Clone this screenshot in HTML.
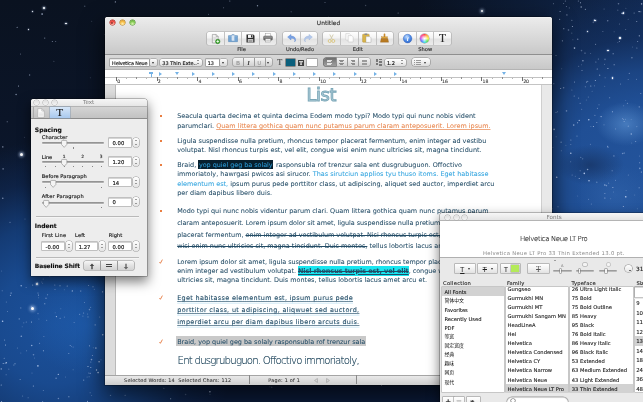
<!DOCTYPE html>
<html><head><meta charset="utf-8"><title>Untitled</title>
<style>
html,body{margin:0;padding:0}
body{width:643px;height:402px;overflow:hidden;position:relative;background:#0b1426;font-family:'DejaVu Sans','Liberation Sans','Noto Sans CJK SC',sans-serif}
.t{position:absolute;white-space:nowrap;-webkit-text-stroke:.14px currentColor;}
div,span,svg{box-sizing:border-box}
svg{position:absolute;overflow:visible}
#root{position:absolute;left:0;top:0;width:643px;height:402px;overflow:hidden;will-change:transform}
</style></head>
<body>
<div id="root">
<div style="position:absolute;left:0;top:0;width:643px;height:402px;background:
radial-gradient(ellipse 30px 22px at 626px 124px, rgba(86,140,205,.7), rgba(86,140,205,0) 100%),
radial-gradient(ellipse 34px 20px at 590px 165px, rgba(20,44,86,.6), rgba(20,44,86,0) 100%),
radial-gradient(ellipse 40px 30px at 615px 195px, rgba(52,104,176,.5), rgba(52,104,176,0) 100%),
radial-gradient(ellipse 60px 50px at 88px 325px, rgba(32,96,178,.6), rgba(32,96,178,0) 100%),
radial-gradient(ellipse 215px 190px at 650px 178px, #23549c 0%, #204f95 40%, rgba(28,70,134,.95) 56%, rgba(20,50,100,.7) 74%, rgba(14,34,70,0) 100%),
radial-gradient(ellipse 185px 185px at 55px 325px, #1b509a 0%, #194a8f 32%, rgba(21,62,122,.92) 55%, rgba(16,42,86,.6) 78%, rgba(13,30,60,0) 100%),
linear-gradient(90deg,rgba(10,18,34,0) 0%,rgba(10,18,34,0) 65%,rgba(18,44,88,.85) 100%),
linear-gradient(180deg,#0a1220 0%,#0b1528 30%,#0c1a34 70%,#0b1a38 100%);"></div>
<div style="position:absolute;left:0;top:0;width:1px;height:1px;border-radius:50%;box-shadow:208.2px 60.6px 0 0.0px rgba(210,225,255,0.25),528.1px 37.8px 0 0.0px rgba(210,225,255,0.80),584.9px 86.3px 0 0.2px rgba(210,225,255,0.25),268.9px 96.7px 0 0.2px rgba(210,225,255,0.80),38.0px 227.3px 0 0.3px rgba(210,225,255,0.35),609.4px 232.0px 0 0.0px rgba(210,225,255,0.60),627.7px 18.7px 0 0.0px rgba(210,225,255,0.35),269.5px 217.4px 0 0.0px rgba(210,225,255,0.80),360.2px 274.2px 0 0.3px rgba(210,225,255,0.25),367.3px 75.5px 0 0.3px rgba(210,225,255,0.25),457.9px 226.9px 0 0.0px rgba(210,225,255,0.80),319.2px 213.8px 0 0.2px rgba(210,225,255,0.45),376.5px 182.2px 0 0.0px rgba(210,225,255,0.45),510.8px 281.0px 0 0.0px rgba(210,225,255,0.35),369.4px 211.1px 0 0.2px rgba(210,225,255,0.45),185.1px 394.0px 0 0.3px rgba(210,225,255,0.25),268.9px 304.4px 0 0.2px rgba(210,225,255,0.35),271.2px 386.7px 0 0.3px rgba(210,225,255,0.25),368.5px 351.9px 0 0.0px rgba(210,225,255,0.45),447.1px 238.9px 0 0.2px rgba(210,225,255,0.80),44.2px 37.6px 0 0.2px rgba(210,225,255,0.45),448.2px 26.1px 0 0.3px rgba(210,225,255,0.45),638.6px 330.4px 0 0.2px rgba(210,225,255,0.45),570.4px 139.5px 0 0.0px rgba(210,225,255,0.60),108.1px 47.1px 0 0.0px rgba(210,225,255,0.25),494.0px 52.0px 0 0.2px rgba(210,225,255,0.35),251.4px 350.3px 0 0.0px rgba(210,225,255,0.25),288.8px 220.9px 0 0.2px rgba(210,225,255,0.35),555.5px 111.9px 0 0.0px rgba(210,225,255,0.60),439.0px 152.9px 0 0.0px rgba(210,225,255,0.35),53.4px 60.8px 0 0.0px rgba(210,225,255,0.35),311.8px 236.8px 0 0.0px rgba(210,225,255,0.45),2.6px 168.4px 0 0.3px rgba(210,225,255,0.45),364.2px 383.1px 0 0.3px rgba(210,225,255,0.80),421.1px 297.4px 0 0.3px rgba(210,225,255,0.60),252.3px 160.4px 0 0.2px rgba(210,225,255,0.25),407.8px 25.0px 0 0.0px rgba(210,225,255,0.25),283.3px 44.2px 0 0.0px rgba(210,225,255,0.80),65.8px 227.8px 0 0.0px rgba(210,225,255,0.80),610.2px 246.7px 0 0.0px rgba(210,225,255,0.25),394.8px 59.7px 0 0.0px rgba(210,225,255,0.45),387.3px 190.6px 0 0.2px rgba(210,225,255,0.25),638.6px 187.3px 0 0.0px rgba(210,225,255,0.60),55.2px 41.1px 0 0.0px rgba(210,225,255,0.45),307.8px 278.2px 0 0.0px rgba(210,225,255,0.80),132.0px 382.7px 0 0.0px rgba(210,225,255,0.45),443.7px 367.5px 0 0.0px rgba(210,225,255,0.80),629.2px 347.1px 0 0.3px rgba(210,225,255,0.45),235.8px 67.2px 0 0.3px rgba(210,225,255,0.35),348.2px 202.1px 0 0.3px rgba(210,225,255,0.35),521.8px 395.9px 0 0.0px rgba(210,225,255,0.35),526.2px 297.4px 0 0.0px rgba(210,225,255,0.35),332.8px 142.9px 0 0.0px rgba(210,225,255,0.25),508.0px 189.8px 0 0.3px rgba(210,225,255,0.35),615.0px 179.8px 0 0.0px rgba(210,225,255,0.45),51.8px 41.1px 0 0.0px rgba(210,225,255,0.60),217.2px 194.0px 0 0.0px rgba(210,225,255,0.80),308.3px 262.5px 0 0.0px rgba(210,225,255,0.25),585.0px 314.5px 0 0.2px rgba(210,225,255,0.35),571.6px 174.4px 0 0.0px rgba(210,225,255,0.45),514.9px 390.6px 0 0.2px rgba(210,225,255,0.60),258.1px 380.6px 0 0.0px rgba(210,225,255,0.35),638.6px 11.1px 0 0.2px rgba(210,225,255,0.80),518.6px 58.8px 0 0.2px rgba(210,225,255,0.80),422.6px 140.9px 0 0.3px rgba(210,225,255,0.80),84.2px 5.7px 0 0.3px rgba(210,225,255,0.25),481.9px 56.0px 0 0.0px rgba(210,225,255,0.35),18.0px 85.5px 0 0.0px rgba(210,225,255,0.80),491.0px 131.0px 0 0.2px rgba(210,225,255,0.80),536.4px 24.5px 0 0.2px rgba(210,225,255,0.45),426.0px 327.6px 0 0.2px rgba(210,225,255,0.80),531.9px 353.0px 0 0.3px rgba(210,225,255,0.35),97.6px 205.2px 0 0.0px rgba(210,225,255,0.60),391.3px 312.0px 0 0.0px rgba(210,225,255,0.35),91.0px 248.9px 0 0.3px rgba(210,225,255,0.25),39.7px 274.3px 0 0.3px rgba(210,225,255,0.80),310.2px 312.1px 0 0.0px rgba(210,225,255,0.80),159.8px 111.3px 0 0.3px rgba(210,225,255,0.25),290.7px 11.2px 0 0.2px rgba(210,225,255,0.25),209.4px 391.3px 0 0.3px rgba(210,225,255,0.80),128.2px 111.4px 0 0.3px rgba(210,225,255,0.80),519.1px 204.1px 0 0.3px rgba(210,225,255,0.35),563.6px 378.8px 0 0.3px rgba(210,225,255,0.45),574.0px 81.4px 0 0.0px rgba(210,225,255,0.60),267.9px 157.7px 0 0.0px rgba(210,225,255,0.45),431.6px 172.2px 0 0.0px rgba(210,225,255,0.35),504.1px 360.6px 0 0.0px rgba(210,225,255,0.35),91.9px 354.9px 0 0.0px rgba(210,225,255,0.60),480.1px 37.8px 0 0.0px rgba(210,225,255,0.60),636.5px 334.6px 0 0.2px rgba(210,225,255,0.35),639.2px 162.3px 0 0.0px rgba(210,225,255,0.60),229.3px 37.1px 0 0.0px rgba(210,225,255,0.45),217.3px 184.4px 0 0.2px rgba(210,225,255,0.25),213.2px 250.8px 0 0.0px rgba(210,225,255,0.80),72.6px 369.3px 0 0.0px rgba(210,225,255,0.35),54.1px 109.3px 0 0.0px rgba(210,225,255,0.35),486.0px 329.6px 0 0.2px rgba(210,225,255,0.45),96.0px 369.5px 0 0.2px rgba(210,225,255,0.80),450.4px 36.0px 0 0.0px rgba(210,225,255,0.25),273.5px 29.1px 0 0.0px rgba(210,225,255,0.25),515.4px 33.7px 0 0.0px rgba(210,225,255,0.35),170.0px 48.9px 0 0.0px rgba(210,225,255,0.25),639.3px 167.9px 0 0.3px rgba(210,225,255,0.45),83.1px 211.8px 0 0.0px rgba(210,225,255,0.35),623.2px 105.3px 0 0.0px rgba(210,225,255,0.35),599.4px 252.7px 0 0.0px rgba(210,225,255,0.80),186.4px 201.0px 0 0.0px rgba(210,225,255,0.35),223.1px 7.3px 0 0.0px rgba(210,225,255,0.45),9.9px 294.7px 0 0.0px rgba(210,225,255,0.80),330.7px 98.8px 0 0.0px rgba(210,225,255,0.60),423.3px 261.3px 0 0.3px rgba(210,225,255,0.60),536.7px 158.0px 0 0.0px rgba(210,225,255,0.80),442.2px 394.9px 0 0.0px rgba(210,225,255,0.45),535.2px 284.1px 0 0.2px rgba(210,225,255,0.35),636.2px 394.7px 0 0.0px rgba(210,225,255,0.35),45.5px 297.8px 0 0.2px rgba(210,225,255,0.45),105.0px 34.0px 0 0.3px rgba(210,225,255,0.60),431.2px 113.3px 0 0.0px rgba(210,225,255,0.35),29.1px 74.5px 0 0.2px rgba(210,225,255,0.45),2.3px 146.4px 0 0.3px rgba(210,225,255,0.45),208.0px 13.8px 0 0.0px rgba(210,225,255,0.45),229.3px 0.4px 0 0.0px rgba(210,225,255,0.60),305.2px 202.1px 0 0.0px rgba(210,225,255,0.35),324.5px 2.0px 0 0.0px rgba(210,225,255,0.45),92.5px 235.9px 0 0.0px rgba(210,225,255,0.60),192.7px 253.1px 0 0.3px rgba(210,225,255,0.25),615.8px 343.0px 0 0.3px rgba(210,225,255,0.35),250.5px 131.1px 0 0.0px rgba(210,225,255,0.60),182.7px 248.7px 0 0.0px rgba(210,225,255,0.35),530.4px 287.4px 0 0.2px rgba(210,225,255,0.80),471.9px 326.5px 0 0.3px rgba(210,225,255,0.35),484.1px 228.5px 0 0.3px rgba(210,225,255,0.25),513.1px 285.9px 0 0.0px rgba(210,225,255,0.35),20.0px 53.5px 0 0.0px rgba(210,225,255,0.45),242.2px 181.5px 0 0.0px rgba(210,225,255,0.25),402.7px 273.6px 0 0.0px rgba(210,225,255,0.60),2.1px 320.7px 0 0.3px rgba(210,225,255,0.80),59.1px 211.4px 0 0.0px rgba(210,225,255,0.60),520.3px 340.1px 0 0.0px rgba(210,225,255,0.35),148.4px 261.3px 0 0.2px rgba(210,225,255,0.60),543.7px 30.8px 0 0.0px rgba(210,225,255,0.45),396.7px 258.4px 0 0.3px rgba(210,225,255,0.25),94.8px 102.1px 0 0.3px rgba(210,225,255,0.45),365.1px 5.0px 0 0.2px rgba(210,225,255,0.25),172.8px 270.1px 0 0.2px rgba(210,225,255,0.35),187.0px 207.6px 0 0.2px rgba(210,225,255,0.60),299.9px 47.6px 0 0.0px rgba(210,225,255,0.80),200.4px 34.5px 0 0.0px rgba(210,225,255,0.60),186.2px 30.7px 0 0.2px rgba(210,225,255,0.80),639.1px 155.5px 0 0.0px rgba(210,225,255,0.35),373.9px 57.0px 0 0.0px rgba(210,225,255,0.80),612.6px 53.3px 0 0.0px rgba(210,225,255,0.80),570.3px 282.7px 0 0.2px rgba(210,225,255,0.35),577.2px 195.4px 0 0.0px rgba(210,225,255,0.25),2.3px 197.7px 0 0.2px rgba(210,225,255,0.60),194.2px 56.6px 0 0.2px rgba(210,225,255,0.45),203.2px 337.8px 0 0.0px rgba(210,225,255,0.25),482.7px 337.3px 0 0.0px rgba(210,225,255,0.25),458.5px 362.4px 0 0.0px rgba(210,225,255,0.45),239.3px 157.9px 0 0.0px rgba(210,225,255,0.80),231.9px 172.1px 0 0.0px rgba(210,225,255,0.45),180.5px 20.8px 0 0.0px rgba(210,225,255,0.45),160.3px 106.8px 0 0.0px rgba(210,225,255,0.80),122.1px 150.1px 0 0.0px rgba(210,225,255,0.60),522.1px 253.6px 0 0.3px rgba(210,225,255,0.80),130.8px 32.4px 0 0.2px rgba(210,225,255,0.60),395.4px 55.7px 0 0.2px rgba(210,225,255,0.45),31.5px 372.6px 0 0.0px rgba(210,225,255,0.35),303.6px 138.2px 0 0.0px rgba(210,225,255,0.45),475.2px 392.5px 0 0.2px rgba(210,225,255,0.45),421.8px 120.9px 0 0.2px rgba(210,225,255,0.80),77.0px 258.6px 0 0.0px rgba(210,225,255,0.25),321.9px 326.4px 0 0.0px rgba(210,225,255,0.80),291.3px 133.8px 0 0.2px rgba(210,225,255,0.60),89.8px 77.3px 0 0.0px rgba(210,225,255,0.25),219.9px 36.6px 0 0.0px rgba(210,225,255,0.35),166.1px 229.0px 0 0.2px rgba(210,225,255,0.25),246.2px 299.8px 0 0.2px rgba(210,225,255,0.35),173.8px 302.3px 0 0.0px rgba(210,225,255,0.60),369.3px 144.8px 0 0.3px rgba(210,225,255,0.80),404.9px 346.9px 0 0.0px rgba(210,225,255,0.35),174.3px 99.9px 0 0.2px rgba(210,225,255,0.60),277.7px 125.4px 0 0.0px rgba(210,225,255,0.25),20.7px 285.2px 0 0.3px rgba(210,225,255,0.60),315.0px 29.4px 0 0.2px rgba(210,225,255,0.80),625.2px 99.9px 0 0.0px rgba(210,225,255,0.25),99.3px 210.0px 0 0.2px rgba(210,225,255,0.25),54.7px 312.3px 0 0.0px rgba(210,225,255,0.25),149.5px 369.8px 0 0.0px rgba(210,225,255,0.45),402.8px 212.4px 0 0.0px rgba(210,225,255,0.60),63.9px 120.7px 0 0.0px rgba(210,225,255,0.80),249.5px 89.9px 0 0.0px rgba(210,225,255,0.80),6.7px 121.2px 0 0.0px rgba(210,225,255,0.60),616.6px 259.1px 0 0.2px rgba(210,225,255,0.35),338.4px 219.9px 0 0.2px rgba(210,225,255,0.25),453.1px 123.6px 0 0.0px rgba(210,225,255,0.25),320.4px 271.1px 0 0.0px rgba(210,225,255,0.60),165.4px 268.3px 0 0.0px rgba(210,225,255,0.45),317.0px 279.7px 0 0.0px rgba(210,225,255,0.60),438.9px 79.6px 0 0.3px rgba(210,225,255,0.45),43.4px 199.3px 0 0.0px rgba(210,225,255,0.35),492.4px 78.0px 0 0.0px rgba(210,225,255,0.60),170.4px 357.5px 0 0.3px rgba(210,225,255,0.25),318.8px 75.3px 0 0.2px rgba(210,225,255,0.35),268.1px 267.4px 0 0.0px rgba(210,225,255,0.80),592.8px 21.9px 0 0.3px rgba(210,225,255,0.25),91.2px 20.8px 0 0.0px rgba(210,225,255,0.25),252.9px 361.1px 0 0.0px rgba(210,225,255,0.45),641.4px 374.5px 0 0.0px rgba(210,225,255,0.45),119.3px 376.2px 0 0.0px rgba(210,225,255,0.60),200.5px 291.6px 0 0.0px rgba(210,225,255,0.45),284.5px 43.8px 0 0.0px rgba(210,225,255,0.25),51.9px 168.9px 0 0.3px rgba(210,225,255,0.25),620.0px 83.4px 0 0.0px rgba(210,225,255,0.45),528.6px 173.8px 0 0.2px rgba(210,225,255,0.25),125.8px 217.7px 0 0.0px rgba(210,225,255,0.60),207.9px 296.4px 0 0.0px rgba(210,225,255,0.60),406.2px 99.7px 0 0.0px rgba(210,225,255,0.60),241.5px 186.5px 0 0.0px rgba(210,225,255,0.25),125.3px 25.3px 0 0.0px rgba(210,225,255,0.80),233.4px 134.7px 0 0.0px rgba(210,225,255,0.80),168.6px 288.1px 0 0.0px rgba(210,225,255,0.45),191.2px 290.1px 0 0.0px rgba(210,225,255,0.80),15.6px 94.0px 0 0.2px rgba(210,225,255,0.60),613.4px 155.4px 0 0.2px rgba(210,225,255,0.45),523.9px 53.3px 0 0.0px rgba(210,225,255,0.60),5.6px 374.3px 0 0.0px rgba(210,225,255,0.45),390.5px 131.8px 0 0.2px rgba(210,225,255,0.45),232.7px 314.5px 0 0.3px rgba(210,225,255,0.25),126.9px 302.7px 0 0.2px rgba(210,225,255,0.35),41.6px 13.6px 0 0.3px rgba(210,225,255,0.80),209.5px 394.1px 0 0.0px rgba(210,225,255,0.25),170.3px 33.8px 0 0.2px rgba(210,225,255,0.25),320.5px 285.3px 0 0.0px rgba(210,225,255,0.60),150.6px 167.6px 0 0.0px rgba(210,225,255,0.80),480.9px 340.5px 0 0.0px rgba(210,225,255,0.25),188.9px 227.9px 0 0.0px rgba(210,225,255,0.45),474.6px 80.1px 0 0.0px rgba(210,225,255,0.35),157.8px 61.6px 0 0.0px rgba(210,225,255,0.80),209.8px 159.2px 0 0.3px rgba(210,225,255,0.35),338.4px 261.2px 0 0.2px rgba(210,225,255,0.25),637.2px 41.1px 0 0.0px rgba(210,225,255,0.60),540.5px 367.6px 0 0.0px rgba(210,225,255,0.25),149.7px 20.3px 0 0.3px rgba(210,225,255,0.80),124.8px 30.2px 0 0.0px rgba(210,225,255,0.80),288.8px 104.5px 0 0.0px rgba(210,225,255,0.25),409.9px 285.3px 0 0.0px rgba(210,225,255,0.45),24.1px 136.7px 0 0.0px rgba(210,225,255,0.25),642.9px 15.4px 0 0.0px rgba(210,225,255,0.35),526.5px 164.4px 0 0.0px rgba(210,225,255,0.45),399.3px 31.3px 0 0.2px rgba(210,225,255,0.25),352.4px 25.4px 0 0.2px rgba(210,225,255,0.25),427.0px 62.1px 0 0.0px rgba(210,225,255,0.80),419.9px 159.9px 0 0.2px rgba(210,225,255,0.45),635.4px 268.5px 0 0.0px rgba(210,225,255,0.60),200.8px 227.7px 0 0.2px rgba(210,225,255,0.45),267.8px 347.4px 0 0.0px rgba(210,225,255,0.45),251.2px 162.8px 0 0.2px rgba(210,225,255,0.25),579.7px 170.3px 0 0.2px rgba(210,225,255,0.25),371.5px 146.6px 0 0.0px rgba(210,225,255,0.35),9.5px 221.7px 0 0.0px rgba(210,225,255,0.60),368.4px 372.7px 0 0.0px rgba(210,225,255,0.80),93.8px 113.9px 0 0.0px rgba(210,225,255,0.80),595.1px 43.7px 0 0.0px rgba(210,225,255,0.60),193.9px 336.6px 0 0.2px rgba(210,225,255,0.25),202.2px 244.3px 0 0.0px rgba(210,225,255,0.60),581.4px 249.4px 0 0.0px rgba(210,225,255,0.35),399.3px 247.1px 0 0.2px rgba(210,225,255,0.35),117.6px 87.7px 0 0.3px rgba(210,225,255,0.60),100.6px 144.4px 0 0.0px rgba(210,225,255,0.35),624.2px 327.9px 0 0.0px rgba(210,225,255,0.35),568.3px 338.7px 0 0.0px rgba(210,225,255,0.25),75.7px 241.0px 0 0.0px rgba(210,225,255,0.80),417.3px 123.9px 0 0.2px rgba(210,225,255,0.35),250.3px 147.7px 0 0.2px rgba(210,225,255,0.80),114.9px 1.4px 0 0.2px rgba(210,225,255,0.60),151.3px 307.0px 0 0.0px rgba(210,225,255,0.60),521.2px 160.9px 0 0.0px rgba(210,225,255,0.25),230.6px 146.9px 0 0.3px rgba(210,225,255,0.60),328.0px 16.4px 0 0.0px rgba(210,225,255,0.35),592.9px 126.1px 0 0.0px rgba(210,225,255,0.80),34.9px 202.6px 0 0.0px rgba(210,225,255,0.60),16.6px 26.7px 0 0.0px rgba(210,225,255,0.80),124.6px 394.7px 0 0.0px rgba(210,225,255,0.60),615.1px 368.2px 0 0.0px rgba(210,225,255,0.35),42.1px 141.1px 0 0.0px rgba(210,225,255,0.45),208.2px 246.6px 0 0.0px rgba(210,225,255,0.60),163.4px 387.7px 0 0.0px rgba(210,225,255,0.60),380.6px 247.6px 0 0.0px rgba(210,225,255,0.35),239.4px 80.0px 0 0.0px rgba(210,225,255,0.60),409.3px 111.8px 0 0.2px rgba(210,225,255,0.45),108.5px 315.5px 0 0.3px rgba(210,225,255,0.25),31.2px 345.0px 0 0.3px rgba(210,225,255,0.60),335.3px 276.9px 0 0.0px rgba(210,225,255,0.25),638.5px 253.2px 0 0.0px rgba(210,225,255,0.60),170.2px 398.2px 0 0.0px rgba(210,225,255,0.80),231.6px 307.4px 0 0.0px rgba(210,225,255,0.60),113.7px 298.9px 0 0.0px rgba(210,225,255,0.25),527.1px 102.0px 0 0.0px rgba(210,225,255,0.80),471.3px 300.3px 0 0.0px rgba(210,225,255,0.35),187.1px 251.5px 0 0.3px rgba(210,225,255,0.60),234.1px 19.2px 0 0.0px rgba(210,225,255,0.60),393.8px 18.3px 0 0.0px rgba(210,225,255,0.25),364.7px 122.1px 0 0.0px rgba(210,225,255,0.80),343.4px 166.1px 0 0.3px rgba(210,225,255,0.45),86.0px 147.2px 0 0.0px rgba(210,225,255,0.60),86.6px 376.5px 0 0.0px rgba(210,225,255,0.35),289.9px 25.6px 0 0.0px rgba(210,225,255,0.35),258.5px 106.2px 0 0.0px rgba(210,225,255,0.25),414.7px 226.1px 0 0.3px rgba(210,225,255,0.45),415.1px 178.4px 0 0.2px rgba(210,225,255,0.80),159.8px 363.2px 0 0.0px rgba(210,225,255,0.25),341.8px 163.2px 0 0.0px rgba(210,225,255,0.35),37.5px 313.1px 0 0.3px rgba(210,225,255,0.25),354.2px 378.3px 0 0.2px rgba(210,225,255,0.35),128.3px 244.4px 0 0.2px rgba(210,225,255,0.80),523.0px 70.2px 0 0.0px rgba(210,225,255,0.45),193.1px 19.5px 0 0.3px rgba(210,225,255,0.60),4.1px 339.5px 0 0.0px rgba(210,225,255,0.60),476.9px 181.9px 0 0.0px rgba(210,225,255,0.35),168.1px 258.9px 0 0.0px rgba(210,225,255,0.25),573.1px 371.9px 0 0.0px rgba(210,225,255,0.45),171.0px 222.6px 0 0.3px rgba(210,225,255,0.60),624.9px 118.8px 0 0.0px rgba(210,225,255,0.35),565.9px 6.1px 0 0.0px rgba(210,225,255,0.45),541.2px 81.5px 0 0.0px rgba(210,225,255,0.35),123.4px 156.3px 0 0.0px rgba(210,225,255,0.80),244.0px 342.5px 0 0.2px rgba(210,225,255,0.80),303.6px 213.3px 0 0.0px rgba(210,225,255,0.25),281.1px 291.3px 0 0.0px rgba(210,225,255,0.80),507.5px 157.4px 0 0.0px rgba(210,225,255,0.80),363.4px 69.0px 0 0.0px rgba(210,225,255,0.25),71.9px 250.0px 0 0.0px rgba(210,225,255,0.35),628.5px 281.7px 0 0.0px rgba(210,225,255,0.25),89.0px 258.7px 0 0.0px rgba(210,225,255,0.25),473.8px 26.4px 0 0.0px rgba(210,225,255,0.80),128.2px 383.7px 0 0.0px rgba(210,225,255,0.80),565.7px 303.8px 0 0.0px rgba(210,225,255,0.60),158.5px 81.7px 0 0.0px rgba(210,225,255,0.25),610.4px 366.3px 0 0.0px rgba(210,225,255,0.25),306.8px 53.3px 0 0.0px rgba(210,225,255,0.35),205.2px 170.4px 0 0.0px rgba(210,225,255,0.25),165.1px 113.6px 0 0.0px rgba(210,225,255,0.45),494.6px 242.0px 0 0.0px rgba(210,225,255,0.60),397.6px 12.5px 0 0.0px rgba(210,225,255,0.60),280.6px 310.8px 0 0.2px rgba(210,225,255,0.45),453.1px 216.2px 0 0.0px rgba(210,225,255,0.35),369.4px 115.4px 0 0.0px rgba(210,225,255,0.60),336.6px 115.9px 0 0.0px rgba(210,225,255,0.25),223.6px 38.5px 0 0.2px rgba(210,225,255,0.35),381.0px 384.8px 0 0.0px rgba(210,225,255,0.80),371.7px 63.9px 0 0.0px rgba(210,225,255,0.35),320.4px 44.2px 0 0.2px rgba(210,225,255,0.25),506.6px 280.3px 0 0.0px rgba(210,225,255,0.25),228.7px 161.3px 0 0.0px rgba(210,225,255,0.60),271.4px 259.6px 0 0.0px rgba(210,225,255,0.45),194.9px 172.1px 0 0.3px rgba(210,225,255,0.80),110.0px 394.9px 0 0.2px rgba(210,225,255,0.35),81.6px 238.8px 0 0.0px rgba(210,225,255,0.80),224.1px 131.3px 0 0.2px rgba(210,225,255,0.35),425.7px 298.3px 0 0.2px rgba(210,225,255,0.35),282.1px 310.9px 0 0.0px rgba(210,225,255,0.80),81.1px 185.7px 0 0.3px rgba(210,225,255,0.35),123.2px 121.2px 0 0.0px rgba(210,225,255,0.80),465.1px 391.9px 0 0.3px rgba(210,225,255,0.45),335.8px 64.7px 0 0.0px rgba(210,225,255,0.45),166.3px 383.9px 0 0.0px rgba(210,225,255,0.25),618.8px 40.9px 0 0.0px rgba(210,225,255,0.60),632.6px 319.5px 0 0.2px rgba(210,225,255,0.45),176.1px 43.9px 0 0.0px rgba(210,225,255,0.25),132.7px 156.1px 0 0.0px rgba(210,225,255,0.25),256.6px 318.0px 0 0.3px rgba(210,225,255,0.35),630.7px 119.1px 0 0.0px rgba(210,225,255,0.25),165.4px 296.8px 0 0.0px rgba(210,225,255,0.25),583.8px 172.9px 0 0.3px rgba(210,225,255,0.80),481.7px 169.3px 0 0.3px rgba(210,225,255,0.35),548.1px 273.2px 0 0.2px rgba(210,225,255,0.25),278.1px 104.4px 0 0.2px rgba(210,225,255,0.25),155.9px 160.9px 0 0.0px rgba(210,225,255,0.35),546.2px 194.1px 0 0.3px rgba(210,225,255,0.25),552.0px 208.3px 0 0.0px rgba(210,225,255,0.35),500.4px 156.3px 0 0.0px rgba(210,225,255,0.60),24.5px 218.4px 0 0.0px rgba(210,225,255,0.35),333.9px 40.6px 0 0.2px rgba(210,225,255,0.80),347.9px 288.4px 0 0.0px rgba(210,225,255,0.80),411.0px 333.3px 0 0.0px rgba(210,225,255,0.80),263.9px 381.1px 0 0.0px rgba(210,225,255,0.35),252.4px 306.6px 0 0.3px rgba(210,225,255,0.25),228.6px 22.8px 0 0.2px rgba(210,225,255,0.45),257.0px 5.3px 0 0.2px rgba(210,225,255,0.60),404.2px 271.3px 0 0.0px rgba(210,225,255,0.80),70.3px 122.0px 0 0.3px rgba(210,225,255,0.60),624.7px 399.7px 0 0.2px rgba(210,225,255,0.60),136.3px 52.0px 0 0.0px rgba(210,225,255,0.25),301.7px 225.9px 0 0.0px rgba(210,225,255,0.35),227.1px 256.8px 0 0.2px rgba(210,225,255,0.60),640.5px 305.5px 0 0.2px rgba(210,225,255,0.35),228.1px 342.0px 0 0.2px rgba(210,225,255,0.45),442.0px 395.1px 0 0.2px rgba(210,225,255,0.35),1.7px 290.2px 0 0.0px rgba(210,225,255,0.45),157.5px 121.3px 0 0.2px rgba(210,225,255,0.60),275.5px 256.2px 0 0.0px rgba(210,225,255,0.45),597.2px 343.5px 0 0.0px rgba(210,225,255,0.25),532.3px 364.1px 0 0.3px rgba(210,225,255,0.35),534.5px 254.5px 0 0.0px rgba(210,225,255,0.25),134.9px 28.9px 0 0.0px rgba(210,225,255,0.45),391.1px 232.6px 0 0.0px rgba(210,225,255,0.35),499.2px 139.3px 0 0.0px rgba(210,225,255,0.35),581.3px 318.3px 0 0.3px rgba(210,225,255,0.35),573.0px 244.6px 0 0.3px rgba(210,225,255,0.25),506.7px 337.2px 0 0.2px rgba(210,225,255,0.35),445.5px 213.4px 0 0.0px rgba(210,225,255,0.60),356.9px 106.3px 0 0.0px rgba(210,225,255,0.35),304.3px 224.0px 0 0.2px rgba(210,225,255,0.60),582.2px 281.6px 0 0.2px rgba(210,225,255,0.35),105.8px 241.0px 0 0.0px rgba(210,225,255,0.25),540.6px 188.1px 0 0.2px rgba(210,225,255,0.80),427.8px 337.9px 0 0.2px rgba(210,225,255,0.45),269.3px 386.2px 0 0.0px rgba(210,225,255,0.25),409.6px 255.7px 0 0.0px rgba(210,225,255,0.25),607.5px 146.8px 0 0.0px rgba(215,228,255,0.55),598.5px 104.2px 0 0.0px rgba(215,228,255,0.40),571.4px 89.4px 0 0.0px rgba(215,228,255,0.40),560.6px 141.7px 0 0.1px rgba(215,228,255,0.55),622.8px 119.1px 0 0.0px rgba(215,228,255,0.40),591.6px 90.8px 0 0.0px rgba(215,228,255,0.30),578.7px 178.0px 0 0.0px rgba(215,228,255,0.75),597.8px 58.4px 0 0.0px rgba(215,228,255,0.55),611.6px 170.3px 0 0.0px rgba(215,228,255,0.55),580.9px 64.3px 0 0.0px rgba(215,228,255,0.30),588.3px 119.2px 0 0.3px rgba(215,228,255,0.75),604.2px 85.7px 0 0.0px rgba(215,228,255,0.30),556.2px 176.7px 0 0.3px rgba(215,228,255,0.75),621.7px 12.9px 0 0.3px rgba(215,228,255,0.75),565.4px 144.8px 0 0.0px rgba(215,228,255,0.30),555.6px 136.2px 0 0.0px rgba(215,228,255,0.40),612.4px 186.9px 0 0.0px rgba(215,228,255,0.75),635.2px 141.0px 0 0.0px rgba(215,228,255,0.55),623.6px 120.9px 0 0.0px rgba(215,228,255,0.55),568.8px 7.4px 0 0.1px rgba(215,228,255,0.30),603.5px 124.3px 0 0.1px rgba(215,228,255,0.30),603.6px 8.5px 0 0.1px rgba(215,228,255,0.30),604.4px 197.5px 0 0.0px rgba(215,228,255,0.75),553.3px 83.2px 0 0.1px rgba(215,228,255,0.40),622.1px 118.0px 0 0.1px rgba(215,228,255,0.30),571.3px 32.6px 0 0.1px rgba(215,228,255,0.30),552.4px 147.0px 0 0.0px rgba(215,228,255,0.30),571.9px 26.1px 0 0.0px rgba(215,228,255,0.75),577.1px 122.3px 0 0.0px rgba(215,228,255,0.75),636.0px 78.7px 0 0.0px rgba(215,228,255,0.40),578.7px 119.9px 0 0.1px rgba(215,228,255,0.75),612.9px 191.4px 0 0.0px rgba(215,228,255,0.30),553.0px 3.2px 0 0.1px rgba(215,228,255,0.30),580.3px 156.8px 0 0.1px rgba(215,228,255,0.40),607.4px 68.0px 0 0.1px rgba(215,228,255,0.75),613.6px 31.2px 0 0.0px rgba(215,228,255,0.30),638.8px 35.3px 0 0.1px rgba(215,228,255,0.75),587.1px 169.0px 0 0.3px rgba(215,228,255,0.55),582.4px 60.2px 0 0.3px rgba(215,228,255,0.55),618.0px 3.3px 0 0.3px rgba(215,228,255,0.40),627.8px 125.7px 0 0.1px rgba(215,228,255,0.40),587.2px 80.9px 0 0.1px rgba(215,228,255,0.40),577.8px 0.4px 0 0.0px rgba(215,228,255,0.55),590.4px 126.1px 0 0.0px rgba(215,228,255,0.30),627.8px 174.5px 0 0.0px rgba(215,228,255,0.40),640.8px 171.4px 0 0.0px rgba(215,228,255,0.75),600.6px 116.1px 0 0.1px rgba(215,228,255,0.75),570.2px 161.3px 0 0.0px rgba(215,228,255,0.40),607.2px 145.7px 0 0.0px rgba(215,228,255,0.75),636.3px 126.1px 0 0.1px rgba(215,228,255,0.30),593.8px 18.9px 0 0.0px rgba(215,228,255,0.55),573.2px 124.6px 0 0.3px rgba(215,228,255,0.55),581.2px 108.8px 0 0.0px rgba(215,228,255,0.40),571.4px 19.8px 0 0.0px rgba(215,228,255,0.55),604.6px 77.2px 0 0.0px rgba(215,228,255,0.40),556.1px 214.4px 0 0.0px rgba(215,228,255,0.55),585.8px 99.6px 0 0.0px rgba(215,228,255,0.30),580.7px 6.5px 0 0.3px rgba(215,228,255,0.55),607.2px 20.2px 0 0.3px rgba(215,228,255,0.40),596.3px 121.9px 0 0.0px rgba(215,228,255,0.55),590.8px 203.5px 0 0.0px rgba(215,228,255,0.40),628.8px 72.9px 0 0.1px rgba(215,228,255,0.40),559.6px 11.0px 0 0.1px rgba(215,228,255,0.55),596.3px 181.8px 0 0.3px rgba(215,228,255,0.30),610.2px 198.3px 0 0.0px rgba(215,228,255,0.30),581.0px 50.1px 0 0.3px rgba(215,228,255,0.30),587.8px 96.4px 0 0.0px rgba(215,228,255,0.40),639.9px 213.2px 0 0.0px rgba(215,228,255,0.40),555.5px 55.0px 0 0.0px rgba(215,228,255,0.55),634.2px 194.5px 0 0.0px rgba(215,228,255,0.30),623.6px 152.6px 0 0.0px rgba(215,228,255,0.75),561.2px 68.3px 0 0.0px rgba(215,228,255,0.30),613.6px 64.2px 0 0.0px rgba(215,228,255,0.75),594.8px 79.9px 0 0.0px rgba(215,228,255,0.75),586.1px 81.6px 0 0.0px rgba(215,228,255,0.75),625.5px 196.6px 0 0.1px rgba(215,228,255,0.30),617.3px 41.9px 0 0.0px rgba(215,228,255,0.30),636.4px 47.4px 0 0.0px rgba(215,228,255,0.55),622.8px 206.0px 0 0.0px rgba(215,228,255,0.75),609.2px 97.3px 0 0.0px rgba(215,228,255,0.55),626.9px 102.7px 0 0.0px rgba(215,228,255,0.55),582.2px 158.3px 0 0.1px rgba(215,228,255,0.40),602.4px 31.1px 0 0.0px rgba(215,228,255,0.40),590.1px 53.1px 0 0.0px rgba(215,228,255,0.30),604.0px 63.8px 0 0.0px rgba(215,228,255,0.40),596.7px 68.4px 0 0.0px rgba(215,228,255,0.75),566.0px 110.4px 0 0.3px rgba(215,228,255,0.40),595.4px 61.5px 0 0.0px rgba(215,228,255,0.55),640.3px 92.9px 0 0.0px rgba(215,228,255,0.55),636.2px 21.0px 0 0.1px rgba(215,228,255,0.55),633.6px 12.4px 0 0.0px rgba(215,228,255,0.55),641.1px 3.4px 0 0.3px rgba(215,228,255,0.55),564.8px 0.4px 0 0.0px rgba(215,228,255,0.55),584.8px 8.7px 0 0.0px rgba(215,228,255,0.75),577.2px 38.8px 0 0.3px rgba(215,228,255,0.40),622.1px 153.0px 0 0.3px rgba(215,228,255,0.40),559.2px 18.8px 0 0.0px rgba(215,228,255,0.75),568.0px 29.5px 0 0.3px rgba(215,228,255,0.40),580.0px 2.2px 0 0.0px rgba(215,228,255,0.75),599.2px 74.7px 0 0.1px rgba(215,228,255,0.55),560.2px 88.0px 0 0.0px rgba(215,228,255,0.75),631.4px 57.2px 0 0.3px rgba(215,228,255,0.40),627.7px 78.9px 0 0.0px rgba(215,228,255,0.40),604.3px 184.5px 0 0.3px rgba(215,228,255,0.55),636.8px 208.3px 0 0.0px rgba(215,228,255,0.30),584.5px 52.6px 0 0.1px rgba(215,228,255,0.55),604.4px 193.1px 0 0.0px rgba(215,228,255,0.55),638.8px 106.4px 0 0.3px rgba(215,228,255,0.30),625.2px 28.9px 0 0.0px rgba(215,228,255,0.40),572.4px 39.2px 0 0.0px rgba(215,228,255,0.30),574.8px 175.7px 0 0.0px rgba(215,228,255,0.30),560.8px 150.3px 0 0.0px rgba(215,228,255,0.40),553.6px 128.9px 0 0.3px rgba(215,228,255,0.75),573.7px 95.5px 0 0.0px rgba(215,228,255,0.55),617.3px 9.7px 0 0.1px rgba(215,228,255,0.30),596.9px 107.7px 0 0.0px rgba(215,228,255,0.55),563.1px 87.2px 0 0.3px rgba(215,228,255,0.40),605.9px 185.1px 0 0.3px rgba(215,228,255,0.40),594.0px 85.3px 0 0.1px rgba(215,228,255,0.30),615.1px 128.4px 0 0.1px rgba(215,228,255,0.30),640.3px 11.2px 0 0.0px rgba(215,228,255,0.55),588.5px 180.3px 0 0.3px rgba(215,228,255,0.75),625.2px 196.2px 0 0.3px rgba(215,228,255,0.75),556.9px 111.2px 0 0.0px rgba(215,228,255,0.55),631.2px 142.6px 0 0.0px rgba(215,228,255,0.30),561.9px 40.3px 0 0.1px rgba(215,228,255,0.55),570.3px 143.9px 0 0.0px rgba(215,228,255,0.40),590.3px 85.4px 0 0.0px rgba(215,228,255,0.75),625.6px 190.1px 0 0.0px rgba(215,228,255,0.30),630.8px 133.5px 0 0.3px rgba(215,228,255,0.55),625.4px 7.7px 0 0.0px rgba(215,228,255,0.30),563.1px 2.9px 0 0.0px rgba(215,228,255,0.40),578.2px 65.7px 0 0.0px rgba(215,228,255,0.40),557.5px 206.2px 0 0.0px rgba(215,228,255,0.55),594.4px 114.8px 0 0.1px rgba(215,228,255,0.40),563.3px 28.2px 0 0.1px rgba(215,228,255,0.55),604.5px 58.9px 0 0.3px rgba(215,228,255,0.30),578.1px 97.6px 0 0.1px rgba(215,228,255,0.40),570.3px 152.7px 0 0.3px rgba(215,228,255,0.75),579.6px 102.7px 0 0.0px rgba(215,228,255,0.55),574.0px 47.6px 0 0.3px rgba(215,228,255,0.75),588.1px 198.7px 0 0.0px rgba(215,228,255,0.40),581.5px 70.0px 0 0.0px rgba(215,228,255,0.55),631.9px 46.5px 0 0.0px rgba(215,228,255,0.30),566.4px 14.4px 0 0.1px rgba(215,228,255,0.55),611.9px 111.2px 0 0.0px rgba(215,228,255,0.75),618.9px 23.5px 0 0.0px rgba(215,228,255,0.40),589.9px 143.7px 0 0.0px rgba(215,228,255,0.40),608.1px 182.7px 0 0.1px rgba(215,228,255,0.30),576.5px 135.6px 0 0.1px rgba(215,228,255,0.40),92.3px 270.6px 0 0.1px rgba(215,228,255,0.30),42.1px 401.1px 0 0.1px rgba(215,228,255,0.40),90.1px 306.9px 0 0.1px rgba(215,228,255,0.30),90.3px 361.4px 0 0.0px rgba(215,228,255,0.55),31.0px 321.6px 0 0.0px rgba(215,228,255,0.75),0.7px 368.4px 0 0.1px rgba(215,228,255,0.75),47.1px 294.3px 0 0.0px rgba(215,228,255,0.55),46.2px 319.8px 0 0.0px rgba(215,228,255,0.40),87.1px 313.6px 0 0.0px rgba(215,228,255,0.40),21.7px 326.3px 0 0.0px rgba(215,228,255,0.30),5.0px 344.6px 0 0.0px rgba(215,228,255,0.75),97.6px 372.1px 0 0.3px rgba(215,228,255,0.75),87.5px 366.0px 0 0.1px rgba(215,228,255,0.75),49.2px 275.4px 0 0.1px rgba(215,228,255,0.55),100.5px 359.3px 0 0.0px rgba(215,228,255,0.40),43.4px 336.1px 0 0.0px rgba(215,228,255,0.40),102.2px 334.2px 0 0.3px rgba(215,228,255,0.75),95.3px 347.5px 0 0.0px rgba(215,228,255,0.30),38.4px 318.4px 0 0.0px rgba(215,228,255,0.30),54.3px 284.6px 0 0.0px rgba(215,228,255,0.55),87.0px 400.7px 0 0.0px rgba(215,228,255,0.75),55.6px 377.7px 0 0.3px rgba(215,228,255,0.40),94.7px 324.4px 0 0.3px rgba(215,228,255,0.30),63.9px 316.6px 0 0.1px rgba(215,228,255,0.30),1.1px 270.4px 0 0.0px rgba(215,228,255,0.30),42.1px 283.0px 0 0.0px rgba(215,228,255,0.30),20.8px 335.7px 0 0.3px rgba(215,228,255,0.55),54.5px 289.0px 0 0.1px rgba(215,228,255,0.40),63.8px 289.2px 0 0.0px rgba(215,228,255,0.30),10.6px 292.5px 0 0.1px rgba(215,228,255,0.75),65.0px 376.5px 0 0.0px rgba(215,228,255,0.30),72.6px 346.4px 0 0.0px rgba(215,228,255,0.40),37.5px 292.4px 0 0.0px rgba(215,228,255,0.55),91.1px 395.1px 0 0.0px rgba(215,228,255,0.30),20.3px 352.4px 0 0.0px rgba(215,228,255,0.30),23.3px 322.3px 0 0.1px rgba(215,228,255,0.30),5.8px 301.5px 0 0.0px rgba(215,228,255,0.40),16.9px 347.5px 0 0.0px rgba(215,228,255,0.40),0.7px 384.4px 0 0.0px rgba(215,228,255,0.75),44.3px 303.3px 0 0.0px rgba(215,228,255,0.75),25.8px 321.5px 0 0.1px rgba(215,228,255,0.40),32.8px 385.5px 0 0.0px rgba(215,228,255,0.75),84.0px 302.1px 0 0.0px rgba(215,228,255,0.40),38.0px 294.6px 0 0.1px rgba(215,228,255,0.55),59.5px 285.2px 0 0.0px rgba(215,228,255,0.75),42.7px 278.6px 0 0.1px rgba(215,228,255,0.30),87.5px 316.4px 0 0.1px rgba(215,228,255,0.40),20.3px 307.4px 0 0.1px rgba(215,228,255,0.40),3.7px 357.7px 0 0.0px rgba(215,228,255,0.55),25.6px 287.1px 0 0.0px rgba(215,228,255,0.40),57.8px 373.9px 0 0.1px rgba(215,228,255,0.75),88.6px 376.3px 0 0.0px rgba(215,228,255,0.40),37.4px 365.4px 0 0.3px rgba(215,228,255,0.75),22.1px 395.5px 0 0.0px rgba(215,228,255,0.40),91.0px 359.1px 0 0.3px rgba(215,228,255,0.55),95.4px 347.6px 0 0.3px rgba(215,228,255,0.55),26.1px 350.3px 0 0.0px rgba(215,228,255,0.40),92.5px 286.2px 0 0.3px rgba(215,228,255,0.30),90.3px 367.1px 0 0.0px rgba(215,228,255,0.75),69.7px 344.9px 0 0.0px rgba(215,228,255,0.55),41.3px 281.4px 0 0.0px rgba(215,228,255,0.40),34.0px 357.5px 0 0.0px rgba(215,228,255,0.30),59.6px 317.7px 0 0.0px rgba(215,228,255,0.55),7.0px 311.1px 0 0.0px rgba(215,228,255,0.40),13.4px 364.6px 0 0.0px rgba(215,228,255,0.55),42.8px 390.0px 0 0.0px rgba(215,228,255,0.40),18.7px 318.4px 0 0.1px rgba(215,228,255,0.55),2.7px 362.9px 0 0.0px rgba(215,228,255,0.75),106.0px 322.9px 0 0.0px rgba(215,228,255,0.30),30.9px 305.8px 0 0.0px rgba(215,228,255,0.40),42.9px 350.3px 0 0.0px rgba(215,228,255,0.75),80.2px 290.6px 0 0.3px rgba(215,228,255,0.30),33.0px 354.3px 0 0.3px rgba(215,228,255,0.40),89.0px 345.3px 0 0.1px rgba(215,228,255,0.55),71.0px 345.9px 0 0.0px rgba(215,228,255,0.30),88.4px 372.5px 0 0.0px rgba(215,228,255,0.55),92.8px 347.2px 0 0.0px rgba(215,228,255,0.30),72.2px 274.9px 0 0.0px rgba(215,228,255,0.55),82.4px 315.6px 0 0.1px rgba(215,228,255,0.30),73.6px 322.0px 0 0.0px rgba(215,228,255,0.40),55.9px 316.1px 0 0.1px rgba(215,228,255,0.75),98.6px 361.3px 0 0.3px rgba(215,228,255,0.75),5.8px 362.2px 0 0.3px rgba(215,228,255,0.75),89.7px 372.7px 0 0.0px rgba(215,228,255,0.75),4.6px 362.8px 0 0.0px rgba(215,228,255,0.55),57.9px 398.0px 0 0.3px rgba(215,228,255,0.40),27.6px 397.2px 0 0.0px rgba(215,228,255,0.40),36.8px 282.2px 0 0.0px rgba(215,228,255,0.55),14.5px 363.3px 0 0.0px rgba(215,228,255,0.75),74.8px 270.8px 0 0.0px rgba(215,228,255,0.75),99.2px 316.4px 0 0.0px rgba(215,228,255,0.55),93.8px 288.7px 0 0.0px rgba(215,228,255,0.40),66.7px 285.6px 0 0.0px rgba(215,228,255,0.75),71.8px 290.4px 0 0.1px rgba(215,228,255,0.75),88.1px 285.1px 0 0.0px rgba(215,228,255,0.55),38.2px 297.2px 0 0.0px rgba(215,228,255,0.30),32.2px 284.6px 0 0.1px rgba(215,228,255,0.55),102.1px 291.3px 0 0.1px rgba(215,228,255,0.75),60.3px 308.2px 0 0.0px rgba(215,228,255,0.30),1.1px 401.0px 0 0.0px rgba(215,228,255,0.75),79.2px 313.8px 0 0.0px rgba(215,228,255,0.55),68.4px 396.3px 0 0.0px rgba(215,228,255,0.75),83.1px 312.5px 0 0.0px rgba(215,228,255,0.55),68.3px 352.9px 0 0.0px rgba(215,228,255,0.55),8.3px 368.7px 0 0.1px rgba(215,228,255,0.30),89.0px 309.1px 0 0.3px rgba(215,228,255,0.40),89.6px 392.3px 0 0.0px rgba(215,228,255,0.40),83.2px 379.6px 0 0.1px rgba(215,228,255,0.55),19.6px 378.9px 0 0.0px rgba(215,228,255,0.55),39.1px 342.7px 0 0.0px rgba(215,228,255,0.55)"></div>
<div style="position:absolute;left:43.3px;top:7.0px;width:2.0px;height:2.0px;border-radius:50%;background:#fff;box-shadow:0 0 1.6px 0.8px rgba(200,220,255,.55)"></div>
<div style="position:absolute;left:31.6px;top:11.0px;width:1.4px;height:1.4px;border-radius:50%;background:#fff;box-shadow:0 0 1.0px 0.5px rgba(200,220,255,.55)"></div>
<div style="position:absolute;left:65.2px;top:22.8px;width:1.6px;height:1.6px;border-radius:50%;background:#fff;box-shadow:0 0 1.2px 0.6px rgba(200,220,255,.55)"></div>
<div style="position:absolute;left:28.0px;top:28.8px;width:1.2px;height:1.2px;border-radius:50%;background:#fff;box-shadow:0 0 0.8px 0.4px rgba(200,220,255,.55)"></div>
<div style="position:absolute;left:480.7px;top:9.7px;width:2.6px;height:2.6px;border-radius:50%;background:#fff;box-shadow:0 0 2.5px 1.2px rgba(200,220,255,.55)"></div>
<div style="position:absolute;left:30.5px;top:306.5px;width:3.0px;height:3.0px;border-radius:50%;background:#fff;box-shadow:0 0 3.0px 1.5px rgba(200,220,255,.55)"></div>
<div style="position:absolute;left:36.1px;top:283.1px;width:1.8px;height:1.8px;border-radius:50%;background:#fff;box-shadow:0 0 1.5px 0.8px rgba(200,220,255,.55)"></div>
<div style="position:absolute;left:20.2px;top:153.0px;width:3.2px;height:3.2px;border-radius:50%;background:#fff;box-shadow:0 0 2.5px 1.2px rgba(200,220,255,.55)"></div>
<div style="position:absolute;left:594.2px;top:19.7px;width:1.6px;height:1.6px;border-radius:50%;background:#fff;box-shadow:0 0 1.2px 0.6px rgba(200,220,255,.55)"></div>
<div style="position:absolute;left:622.9px;top:12.3px;width:1.4px;height:1.4px;border-radius:50%;background:#fff;box-shadow:0 0 1.0px 0.5px rgba(200,220,255,.55)"></div>
<div style="position:absolute;left:586.8px;top:30.7px;width:1.4px;height:1.4px;border-radius:50%;background:#fff;box-shadow:0 0 1.0px 0.5px rgba(200,220,255,.55)"></div>
<div style="position:absolute;left:619.3px;top:37.3px;width:1.4px;height:1.4px;border-radius:50%;background:#fff;box-shadow:0 0 1.0px 0.5px rgba(200,220,255,.55)"></div>
<div style="position:absolute;left:607.3px;top:49.8px;width:1.4px;height:1.4px;border-radius:50%;background:#fff;box-shadow:0 0 1.0px 0.5px rgba(200,220,255,.55)"></div>
<div style="position:absolute;left:612.0px;top:77.3px;width:1.4px;height:1.4px;border-radius:50%;background:#fff;box-shadow:0 0 1.0px 0.5px rgba(200,220,255,.55)"></div>
<div id="main" style="position:absolute;left:105.0px;top:17.4px;width:447.0px;height:367.2px;border-radius:2.5px 2.5px 0 0;box-shadow:0 9px 22px 2px rgba(0,0,0,.62),0 0 0 .5px rgba(0,0,0,.55);background:#fff;overflow:hidden">
<div style="position:absolute;left:0;top:0;width:100%;height:37.6px;background:linear-gradient(180deg,#ececec 0%,#e3e3e3 25%,#d2d2d2 75%,#c8c8c8 100%);border-bottom:.8px solid #8f8f8f;box-shadow:inset 0 .6px 0 #f8f8f8"></div>
<div style="position:absolute;left:0;top:37.6px;width:100%;height:14.6px;background:linear-gradient(180deg,#d8d8d8,#c8c8c8);border-bottom:.7px solid #b4b4b4"></div>
<div style="position:absolute;left:0;top:52.2px;width:100%;height:15px;background:#fff;border-bottom:.7px solid #c4c4c4"></div>
<div style="position:absolute;left:0;top:67.2px;width:11px;height:290.6px;background:#dcdcdc;border-right:.7px solid #b9b9b9"></div>
<div style="position:absolute;left:436.2px;top:67.2px;width:10.8px;height:290.6px;background:#e9e9e9;border-left:.7px solid #cfcfcf"></div>
<div style="position:absolute;left:0;top:357.6px;width:100%;height:9.6px;background:linear-gradient(180deg,#e9e9e9,#cdcdcd);border-top:.7px solid #a5a5a5"></div>
<div style="position:absolute;left:143.6px;top:358px;width:.7px;height:9px;background:#8a8a8a"></div>
<div style="position:absolute;left:250.5px;top:358px;width:.7px;height:9px;background:#8a8a8a"></div>
</div>
<div style="position:absolute;left:109.50px;top:20.30px;width:5.2px;height:5.2px;border-radius:50%;background:radial-gradient(circle at 50% 75%,#ffd0c0 0%,#f0453c 55%,#a3201a 100%);box-shadow:0 0 0 .5px #a3201a"></div>
<div style="position:absolute;left:119.60px;top:20.30px;width:5.2px;height:5.2px;border-radius:50%;background:radial-gradient(circle at 50% 75%,#fff0b0 0%,#f5b63a 55%,#b07a18 100%);box-shadow:0 0 0 .5px #b07a18"></div>
<div style="position:absolute;left:129.70px;top:20.30px;width:5.2px;height:5.2px;border-radius:50%;background:radial-gradient(circle at 50% 75%,#d8f5b0 0%,#7cc64a 55%,#4a8a28 100%);box-shadow:0 0 0 .5px #4a8a28"></div>
<div style="position:absolute;left:111.2px;top:22px;width:1.800px;height:1.800px;border-radius:50%;background:#7a1410;opacity:.75"></div>
<span id="t1" class="t" style="left:328.50px;transform:translateX(-50%);top:20.42px;font-size:5.90px;line-height:7.67px;color:#333;">Untitled</span>
<div style="position:absolute;left:207.10px;top:31.50px;width:69.20px;height:13.40px;border-radius:2px;background:linear-gradient(180deg,#ffffff,#f3f3f3 45%,#e3e3e3 55%,#ececec);box-shadow:0 0 0 .6px #a9a9a9,0 .7px .6px rgba(255,255,255,.7)"></div>
<div style="position:absolute;left:224.10px;top:31.50px;width:.6px;height:13.40px;background:#c2c2c2"></div>
<div style="position:absolute;left:241.40px;top:31.50px;width:.6px;height:13.40px;background:#c2c2c2"></div>
<div style="position:absolute;left:258.70px;top:31.50px;width:.6px;height:13.40px;background:#c2c2c2"></div>
<div style="position:absolute;left:282.50px;top:31.50px;width:34.60px;height:13.40px;border-radius:2px;background:linear-gradient(180deg,#ffffff,#f3f3f3 45%,#e3e3e3 55%,#ececec);box-shadow:0 0 0 .6px #a9a9a9,0 .7px .6px rgba(255,255,255,.7)"></div>
<div style="position:absolute;left:299.50px;top:31.50px;width:.6px;height:13.40px;background:#c2c2c2"></div>
<div style="position:absolute;left:323.10px;top:31.50px;width:70.40px;height:13.40px;border-radius:2px;background:linear-gradient(180deg,#ffffff,#f3f3f3 45%,#e3e3e3 55%,#ececec);box-shadow:0 0 0 .6px #a9a9a9,0 .7px .6px rgba(255,255,255,.7)"></div>
<div style="position:absolute;left:340.40px;top:31.50px;width:.6px;height:13.40px;background:#c2c2c2"></div>
<div style="position:absolute;left:358.00px;top:31.50px;width:.6px;height:13.40px;background:#c2c2c2"></div>
<div style="position:absolute;left:375.60px;top:31.50px;width:.6px;height:13.40px;background:#c2c2c2"></div>
<div style="position:absolute;left:398.50px;top:31.50px;width:52.80px;height:13.40px;border-radius:2px;background:linear-gradient(180deg,#ffffff,#f3f3f3 45%,#e3e3e3 55%,#ececec);box-shadow:0 0 0 .6px #a9a9a9,0 .7px .6px rgba(255,255,255,.7)"></div>
<div style="position:absolute;left:415.80px;top:31.50px;width:.6px;height:13.40px;background:#c2c2c2"></div>
<div style="position:absolute;left:433.40px;top:31.50px;width:.6px;height:13.40px;background:#c2c2c2"></div>
<span id="t2" class="t" style="left:241.50px;transform:translateX(-50%);top:45.76px;font-size:5.15px;line-height:6.70px;color:#2e2e2e;">File</span>
<span id="t3" class="t" style="left:300.00px;transform:translateX(-50%);top:45.76px;font-size:5.15px;line-height:6.70px;color:#2e2e2e;">Undo/Redo</span>
<span id="t4" class="t" style="left:357.80px;transform:translateX(-50%);top:45.76px;font-size:5.15px;line-height:6.70px;color:#2e2e2e;">Edit</span>
<span id="t5" class="t" style="left:425.20px;transform:translateX(-50%);top:45.76px;font-size:5.15px;line-height:6.70px;color:#2e2e2e;">Show</span>
<svg style="left:211.15px;top:33.50px" width="9" height="9.9" viewBox="0 0 10 11"><path d="M1.5 .5h4.2l2.3 2.3v7.2h-6.5z" fill="#f1f1f1" stroke="#858585" stroke-width=".6"/><path d="M5.7 .5v2.3h2.3" fill="#dcdcdc" stroke="#858585" stroke-width=".5"/><path d="M2.600 4.200h3.800M2.600 5.600h3.800M2.600 7h2.400" stroke="#b5b5b5" stroke-width=".5"/><circle cx="7.500" cy="8.300" r="2.500" fill="#35a827" stroke="#1f6e16" stroke-width=".5"/><path d="M6 8.300h3M7.500 6.800v3" stroke="#fff" stroke-width=".9"/></svg>
<svg style="left:228.05px;top:34.30px" width="10" height="8.2" viewBox="0 0 11 9"><path d="M.6 1.8h3l.8-1h2.4l.8 1h2.8v6.6h-9.8z" fill="#86b2dc" stroke="#4f82b4" stroke-width=".6"/><rect x="3.6" y="1.2" width="3.8" height="6.4" fill="#eef5fb" stroke="#5f8fc0" stroke-width=".4"/><path d="M5.500 2v4.600" stroke="#8fb4d8" stroke-width=".5"/><rect x="1" y="3.200" width="2.600" height="5" fill="#6c9fd2" opacity=".7"/><rect x="7.400" y="3.200" width="2.600" height="5" fill="#6c9fd2" opacity=".7"/></svg>
<svg style="left:245.85px;top:33.70px" width="9" height="9" viewBox="0 0 9 9"><path d="M.5 .5h6.8l1.2 1.2v6.8h-8z" fill="#2b2b2b"/><rect x="2" y=".9" width="4.6" height="3" fill="#f4f4f4"/><rect x="5" y="1.2" width="1" height="2.2" fill="#2b2b2b"/><rect x="1.8" y="5.2" width="5.4" height="3" fill="#e8e8e8"/><rect x="2.4" y="6" width="4.2" height=".5" fill="#555"/><rect x="2.4" y="7" width="4.2" height=".5" fill="#555"/></svg>
<svg style="left:262.65px;top:33.40px" width="10" height="9.6" viewBox="0 0 10 9.6"><rect x="2.6" y=".5" width="4.8" height="3" fill="#fff" stroke="#8a8a8a" stroke-width=".4"/><rect x=".6" y="3" width="8.8" height="4.2" rx="1" fill="#6e6e6e" stroke="#444" stroke-width=".4"/><rect x="1" y="3.4" width="8" height="1.2" rx=".6" fill="#a8a8a8"/><rect x="2.4" y="5.8" width="5.2" height="3.2" fill="#fdfdfd" stroke="#7a7a7a" stroke-width=".4"/><rect x="3.2" y="6.8" width="3.6" height=".4" fill="#999"/><rect x="3.2" y="7.7" width="3.6" height=".4" fill="#999"/></svg>
<svg style="left:286.65px;top:34.20px" width="9" height="8" viewBox="0 0 9 8"><path d="M.6 3.1L4 .4v1.7c3 0 4.6 1.6 4.6 3.6 0 1.1-.5 1.8-1.1 2.2.3-.6.4-1 .4-1.5 0-1.300-1.300-2.200-3.900-2.200v1.700z" fill="#7aa3e4" stroke="#5a84cc" stroke-width=".4"/></svg>
<svg style="left:303.95px;top:34.20px" width="9" height="8" viewBox="0 0 9 8"><path d="M8.400 3.100L5 .400v1.700c-3 0-4.600 1.600-4.600 3.600 0 1.100.5 1.800 1.100 2.200-.3-.6-.4-1-.4-1.500 0-1.300 1.300-2.200 3.900-2.200v1.700z" fill="#b4c8ea" stroke="#9ab2da" stroke-width=".4"/></svg>
<svg style="left:327.40px;top:33.70px" width="9" height="9" viewBox="0 0 9 9"><path d="M2.800 .5L5.400 5.600M6.200 .5L3.600 5.600" stroke="#cfc8a8" stroke-width=".9" fill="none"/><circle cx="2.700" cy="7" r="1.500" fill="none" stroke="#d8c070" stroke-width=".8"/><circle cx="6.300" cy="7" r="1.500" fill="none" stroke="#d8c070" stroke-width=".8"/></svg>
<svg style="left:345.00px;top:33.40px" width="9" height="9.6" viewBox="0 0 9 9.6"><path d="M.8 .6h3.600l1.400 1.400v5h-5z" fill="#fafafa" stroke="#c4c4c4" stroke-width=".5"/><path d="M3.200 2.600h3.600l1.400 1.400v5h-5z" fill="#fdfdfd" stroke="#c0c0c0" stroke-width=".5"/></svg>
<svg style="left:362.30px;top:33.20px" width="9.6" height="10" viewBox="0 0 9.6 10"><rect x=".6" y="1.200" width="6.600" height="8" rx=".6" fill="#d9b44a" stroke="#a8862a" stroke-width=".4"/><rect x="2.400" y=".4" width="3" height="1.600" rx=".4" fill="#8a8a8a"/><path d="M4 3.600h3.800l1.200 1.200v4.600h-5z" fill="#fcfcfc" stroke="#9a9a9a" stroke-width=".4"/></svg>
<svg style="left:380.20px;top:33.20px" width="9" height="10" viewBox="0 0 9 10"><rect x="3.700" y=".4" width="1.600" height="3.600" rx=".6" fill="#c98a2e"/><rect x="1.600" y="3.800" width="5.800" height="1.600" fill="#e2a83a" stroke="#a8741e" stroke-width=".3"/><path d="M1.200 5.400h6.600l.8 3.800h-8.200z" fill="#b87a22" stroke="#8a5a16" stroke-width=".3"/></svg>
<svg style="left:402.70px;top:33.60px" width="9.2" height="9.2" viewBox="0 0 9.2 9.2"><defs><radialGradient id="gi" cx=".4" cy=".3" r=".8"><stop offset="0" stop-color="#c0dcff"/><stop offset=".55" stop-color="#4c8ae6"/><stop offset="1" stop-color="#2c62c4"/></radialGradient></defs><circle cx="4.600" cy="4.600" r="4.300" fill="url(#gi)" stroke="#2a58b0" stroke-width=".4"/><text x="4.700" y="7" font-family="Liberation Serif,serif" font-style="italic" font-weight="bold" font-size="6.800" fill="#fff" text-anchor="middle">i</text></svg>
<div style="position:absolute;left:420.40px;top:33.70px;width:9px;height:9px;border-radius:50%;background:radial-gradient(circle,#fff 0%,rgba(255,255,255,.7) 25%,rgba(255,255,255,0) 65%),conic-gradient(#ff4040,#ffb030,#f0f040,#50e050,#40d8e8,#4870ff,#c050f0,#ff4090,#ff4040);box-shadow:0 0 0 .4px #888"></div>
<span id="t6" class="t" style="left:442.50px;transform:translateX(-50%);top:32.34px;font-size:11.50px;line-height:12.00px;color:#2a2a2a;font-family:'Liberation Serif',serif;">T</span>
<div style="position:absolute;left:110.00px;top:58.80px;width:38.80px;height:7.50px;background:#fff;box-shadow:0 0 0 .6px #8e8e8e, inset 0 .6px .6px rgba(0,0,0,.18)"></div>
<div style="position:absolute;left:149.60px;top:58.80px;width:7.20px;height:7.50px;border-radius:1.400px;background:linear-gradient(180deg,#fdfdfd,#d8d8d8);box-shadow:0 0 0 .6px #8e8e8e"></div>
<div style="position:absolute;left:151.60px;top:61.65px;border-left:1.600px solid transparent;border-right:1.600px solid transparent;border-top:2.200px solid #333;width:0;height:0"></div>
<span id="t7" class="t" style="left:112.10px;top:59.80px;font-size:4.90px;line-height:6.37px;color:#111;letter-spacing:-0.139px;">Helvetica Neue</span>
<div style="position:absolute;left:160.20px;top:58.60px;width:42.00px;height:7.80px;border-radius:2px;background:linear-gradient(180deg,#ffffff,#f0f0f0 50%,#dedede);box-shadow:0 0 0 .6px #8e8e8e"></div>
<div style="position:absolute;left:197.00px;top:60.20px;border-left:1.200px solid transparent;border-right:1.200px solid transparent;border-bottom:1.600px solid #333;width:0;height:0"></div>
<div style="position:absolute;left:197.00px;top:63.20px;border-left:1.200px solid transparent;border-right:1.200px solid transparent;border-top:1.600px solid #333;width:0;height:0"></div>
<span id="t8" class="t" style="left:162.30px;top:59.75px;font-size:4.90px;line-height:6.37px;color:#111;letter-spacing:0.042px;">33 Thin Exte..</span>
<div style="position:absolute;left:205.60px;top:58.80px;width:13.30px;height:7.50px;background:#fff;box-shadow:0 0 0 .6px #8e8e8e, inset 0 .6px .6px rgba(0,0,0,.18)"></div>
<div style="position:absolute;left:219.70px;top:58.80px;width:7.20px;height:7.50px;border-radius:1.400px;background:linear-gradient(180deg,#fdfdfd,#d8d8d8);box-shadow:0 0 0 .6px #8e8e8e"></div>
<div style="position:absolute;left:221.70px;top:61.65px;border-left:1.600px solid transparent;border-right:1.600px solid transparent;border-top:2.200px solid #333;width:0;height:0"></div>
<span id="t9" class="t" style="left:207.70px;top:59.80px;font-size:4.90px;line-height:6.37px;color:#111;">13</span>
<div style="position:absolute;left:232.60px;top:58.40px;width:39.60px;height:7.90px;border-radius:2px;background:linear-gradient(180deg,#f6f6f6,#e2e2e2 50%,#d2d2d2);box-shadow:0 0 0 .6px #8e8e8e"></div>
<div style="position:absolute;left:243.20px;top:58.40px;width:.6px;height:7.90px;background:#9a9a9a"></div>
<div style="position:absolute;left:253.50px;top:58.40px;width:.6px;height:7.90px;background:#9a9a9a"></div>
<div style="position:absolute;left:264.70px;top:58.40px;width:.6px;height:7.90px;background:#9a9a9a"></div>
<span id="t10" class="t" style="left:238.00px;transform:translateX(-50%);top:59.98px;font-size:5.00px;line-height:6.50px;color:#9a9a9a;font-weight:bold;font-family:'Liberation Sans',sans-serif;">B</span>
<span id="t11" class="t" style="left:248.60px;transform:translateX(-50%);top:59.69px;font-size:5.40px;line-height:7.02px;color:#333;font-weight:bold;font-family:'Liberation Serif',serif;"><i>I</i></span>
<span id="t12" class="t" style="left:259.40px;transform:translateX(-50%);top:59.77px;font-size:5.00px;line-height:6.50px;color:#9a9a9a;font-family:'Liberation Sans',sans-serif;"><u>U</u></span>
<div style="position:absolute;left:267.00px;top:61.60px;border-left:1.600px solid transparent;border-right:1.600px solid transparent;border-top:2.200px solid #333;width:0;height:0"></div>
<span id="t13" class="t" style="left:279.80px;transform:translateX(-50%);top:58.30px;font-size:8.20px;line-height:9.00px;color:#4a4a4a;font-family:'Liberation Serif',serif;">T</span>
<div style="position:absolute;left:285.8px;top:59.1px;width:9.4px;height:6.7px;background:#0a5f7c;box-shadow:0 0 0 .5px #444"></div>
<div style="position:absolute;left:298.2px;top:59.5px;width:5.8px;height:6.1px;background:#3e3e3e"></div>
<span id="t14" class="t" style="left:301.10px;transform:translateX(-50%);top:60.11px;font-size:5.40px;line-height:6.00px;color:#fff;font-weight:bold;font-family:'Liberation Serif',serif;">T</span>
<div style="position:absolute;left:306.5px;top:58.6px;width:10.8px;height:7.5px;background:#fff;box-shadow:0 0 0 .6px #8e8e8e"></div>
<div style="position:absolute;left:323.90px;top:58.20px;width:46.60px;height:8.00px;border-radius:2px;background:linear-gradient(180deg,#f6f6f6,#e2e2e2 50%,#d2d2d2);box-shadow:0 0 0 .6px #8e8e8e"></div>
<div style="position:absolute;left:323.90px;top:58.20px;width:11.70px;height:8.00px;border-radius:2px 0 0 2px;background:linear-gradient(180deg,#6e6e6e,#8e8e8e 60%,#9c9c9c);box-shadow:0 0 0 .6px #5a5a5a"></div>
<div style="position:absolute;left:346.70px;top:58.20px;width:.6px;height:8.00px;background:#9a9a9a"></div>
<div style="position:absolute;left:358.40px;top:58.20px;width:.6px;height:8.00px;background:#9a9a9a"></div>
<div style="position:absolute;left:327.40px;top:60.10px;width:4.60px;height:.6px;background:#e2e2e2"></div><div style="position:absolute;left:327.40px;top:61.45px;width:3.20px;height:.6px;background:#e2e2e2"></div><div style="position:absolute;left:327.40px;top:62.80px;width:4.60px;height:.6px;background:#e2e2e2"></div><div style="position:absolute;left:327.40px;top:64.15px;width:3.20px;height:.6px;background:#e2e2e2"></div>
<div style="position:absolute;left:339.00px;top:60.10px;width:4.60px;height:.6px;background:#8e8e8e"></div><div style="position:absolute;left:339.80px;top:61.45px;width:3.00px;height:.6px;background:#8e8e8e"></div><div style="position:absolute;left:339.00px;top:62.80px;width:4.60px;height:.6px;background:#8e8e8e"></div><div style="position:absolute;left:339.80px;top:64.15px;width:3.00px;height:.6px;background:#8e8e8e"></div>
<div style="position:absolute;left:350.60px;top:60.10px;width:4.60px;height:.6px;background:#8e8e8e"></div><div style="position:absolute;left:352.00px;top:61.45px;width:3.20px;height:.6px;background:#8e8e8e"></div><div style="position:absolute;left:350.60px;top:62.80px;width:4.60px;height:.6px;background:#8e8e8e"></div><div style="position:absolute;left:352.00px;top:64.15px;width:3.20px;height:.6px;background:#8e8e8e"></div>
<div style="position:absolute;left:362.30px;top:60.10px;width:4.60px;height:.6px;background:#9a9a9a"></div><div style="position:absolute;left:362.30px;top:61.45px;width:4.60px;height:.6px;background:#9a9a9a"></div><div style="position:absolute;left:362.30px;top:62.80px;width:4.60px;height:.6px;background:#9a9a9a"></div><div style="position:absolute;left:362.30px;top:64.15px;width:4.60px;height:.6px;background:#9a9a9a"></div>
<div style="position:absolute;left:376px;top:58.8px;width:6.200px;height:7px;"><div style="position:absolute;left:2.600px;top:0.3px;width:3.600px;height:1px;background:#777"></div><div style="position:absolute;left:2.600px;top:1.8px;width:3.600px;height:1px;background:#777"></div><div style="position:absolute;left:2.600px;top:3.3px;width:3.600px;height:1px;background:#777"></div><div style="position:absolute;left:2.600px;top:4.8px;width:3.600px;height:1px;background:#777"></div><div style="position:absolute;left:2.600px;top:6.3px;width:3.600px;height:1px;background:#777"></div><div style="position:absolute;left:.2px;top:.4px;width:1.800px;height:2.600px;background:#777"></div><div style="position:absolute;left:.2px;top:4px;width:1.800px;height:2.600px;background:#777"></div></div>
<div style="position:absolute;left:384.80px;top:58.60px;width:21.40px;height:7.80px;border-radius:2px;background:linear-gradient(180deg,#ffffff,#f0f0f0 50%,#dedede);box-shadow:0 0 0 .6px #8e8e8e"></div>
<div style="position:absolute;left:401.00px;top:60.20px;border-left:1.200px solid transparent;border-right:1.200px solid transparent;border-bottom:1.600px solid #333;width:0;height:0"></div>
<div style="position:absolute;left:401.00px;top:63.20px;border-left:1.200px solid transparent;border-right:1.200px solid transparent;border-top:1.600px solid #333;width:0;height:0"></div>
<span id="t15" class="t" style="left:386.90px;top:59.67px;font-size:5.00px;line-height:6.50px;color:#111;">1.2</span>
<div style="position:absolute;left:411.7px;top:58.4px;width:18.2px;height:8px;border-radius:3px;background:linear-gradient(180deg,#ffffff,#f0f0f0 50%,#dcdcdc);box-shadow:0 0 0 .6px #8e8e8e"></div>
<div style="position:absolute;left:415.6px;top:60.40px;width:5.2px;height:1px;background:#999"></div>
<div style="position:absolute;left:414.2px;top:60.40px;width:1px;height:1px;background:#999"></div>
<div style="position:absolute;left:415.6px;top:62.10px;width:5.2px;height:1px;background:#999"></div>
<div style="position:absolute;left:414.2px;top:62.10px;width:1px;height:1px;background:#999"></div>
<div style="position:absolute;left:415.6px;top:63.80px;width:5.2px;height:1px;background:#999"></div>
<div style="position:absolute;left:414.2px;top:63.80px;width:1px;height:1px;background:#999"></div>
<div style="position:absolute;left:423.6px;top:61.6px;border-left:1.500px solid transparent;border-right:1.500px solid transparent;border-top:2px solid #333;width:0;height:0"></div>
<div style="position:absolute;left:105px;top:77px;width:447px;height:1px;background:#c2c2c2"></div>
<div style="position:absolute;left:115.90px;top:77px;width:1px;height:4px;background:#6e6e6e"></div>
<span id="t16" class="t" style="left:117.20px;top:79.17px;font-size:4.60px;line-height:5.98px;color:#2a2a2a;-webkit-text-stroke:0.05px currentColor;">0</span>
<div style="position:absolute;left:126.10px;top:78px;width:1px;height:1px;background:#b5b5b5"></div>
<div style="position:absolute;left:136.20px;top:77px;width:1px;height:2px;background:#8e8e8e"></div>
<div style="position:absolute;left:146.40px;top:78px;width:1px;height:1px;background:#b5b5b5"></div>
<div style="position:absolute;left:156.50px;top:77px;width:1px;height:4px;background:#6e6e6e"></div>
<span id="t17" class="t" style="left:157.80px;top:79.17px;font-size:4.60px;line-height:5.98px;color:#2a2a2a;-webkit-text-stroke:0.05px currentColor;">2</span>
<div style="position:absolute;left:166.70px;top:78px;width:1px;height:1px;background:#b5b5b5"></div>
<div style="position:absolute;left:176.80px;top:77px;width:1px;height:2px;background:#8e8e8e"></div>
<div style="position:absolute;left:187.00px;top:78px;width:1px;height:1px;background:#b5b5b5"></div>
<div style="position:absolute;left:197.10px;top:77px;width:1px;height:4px;background:#6e6e6e"></div>
<span id="t18" class="t" style="left:198.40px;top:79.17px;font-size:4.60px;line-height:5.98px;color:#2a2a2a;-webkit-text-stroke:0.05px currentColor;">4</span>
<div style="position:absolute;left:207.30px;top:78px;width:1px;height:1px;background:#b5b5b5"></div>
<div style="position:absolute;left:217.40px;top:77px;width:1px;height:2px;background:#8e8e8e"></div>
<div style="position:absolute;left:227.60px;top:78px;width:1px;height:1px;background:#b5b5b5"></div>
<div style="position:absolute;left:237.70px;top:77px;width:1px;height:4px;background:#6e6e6e"></div>
<span id="t19" class="t" style="left:239.00px;top:79.17px;font-size:4.60px;line-height:5.98px;color:#2a2a2a;-webkit-text-stroke:0.05px currentColor;">6</span>
<div style="position:absolute;left:247.90px;top:78px;width:1px;height:1px;background:#b5b5b5"></div>
<div style="position:absolute;left:258.00px;top:77px;width:1px;height:2px;background:#8e8e8e"></div>
<div style="position:absolute;left:268.20px;top:78px;width:1px;height:1px;background:#b5b5b5"></div>
<div style="position:absolute;left:278.30px;top:77px;width:1px;height:4px;background:#6e6e6e"></div>
<span id="t20" class="t" style="left:279.60px;top:79.17px;font-size:4.60px;line-height:5.98px;color:#2a2a2a;-webkit-text-stroke:0.05px currentColor;">8</span>
<div style="position:absolute;left:288.50px;top:78px;width:1px;height:1px;background:#b5b5b5"></div>
<div style="position:absolute;left:298.60px;top:77px;width:1px;height:2px;background:#8e8e8e"></div>
<div style="position:absolute;left:308.80px;top:78px;width:1px;height:1px;background:#b5b5b5"></div>
<div style="position:absolute;left:318.90px;top:77px;width:1px;height:4px;background:#6e6e6e"></div>
<span id="t21" class="t" style="left:320.20px;top:79.17px;font-size:4.60px;line-height:5.98px;color:#2a2a2a;-webkit-text-stroke:0.05px currentColor;">10</span>
<div style="position:absolute;left:329.10px;top:78px;width:1px;height:1px;background:#b5b5b5"></div>
<div style="position:absolute;left:339.20px;top:77px;width:1px;height:2px;background:#8e8e8e"></div>
<div style="position:absolute;left:349.40px;top:78px;width:1px;height:1px;background:#b5b5b5"></div>
<div style="position:absolute;left:359.50px;top:77px;width:1px;height:4px;background:#6e6e6e"></div>
<span id="t22" class="t" style="left:360.80px;top:79.17px;font-size:4.60px;line-height:5.98px;color:#2a2a2a;-webkit-text-stroke:0.05px currentColor;">12</span>
<div style="position:absolute;left:369.70px;top:78px;width:1px;height:1px;background:#b5b5b5"></div>
<div style="position:absolute;left:379.80px;top:77px;width:1px;height:2px;background:#8e8e8e"></div>
<div style="position:absolute;left:390.00px;top:78px;width:1px;height:1px;background:#b5b5b5"></div>
<div style="position:absolute;left:400.10px;top:77px;width:1px;height:4px;background:#6e6e6e"></div>
<span id="t23" class="t" style="left:401.40px;top:79.17px;font-size:4.60px;line-height:5.98px;color:#2a2a2a;-webkit-text-stroke:0.05px currentColor;">14</span>
<div style="position:absolute;left:410.30px;top:78px;width:1px;height:1px;background:#b5b5b5"></div>
<div style="position:absolute;left:420.40px;top:77px;width:1px;height:2px;background:#8e8e8e"></div>
<div style="position:absolute;left:430.60px;top:78px;width:1px;height:1px;background:#b5b5b5"></div>
<div style="position:absolute;left:440.70px;top:77px;width:1px;height:4px;background:#6e6e6e"></div>
<span id="t24" class="t" style="left:442.00px;top:79.17px;font-size:4.60px;line-height:5.98px;color:#2a2a2a;-webkit-text-stroke:0.05px currentColor;">16</span>
<div style="position:absolute;left:450.90px;top:78px;width:1px;height:1px;background:#b5b5b5"></div>
<div style="position:absolute;left:461.00px;top:77px;width:1px;height:2px;background:#8e8e8e"></div>
<div style="position:absolute;left:471.20px;top:78px;width:1px;height:1px;background:#b5b5b5"></div>
<div style="position:absolute;left:481.30px;top:77px;width:1px;height:4px;background:#6e6e6e"></div>
<span id="t25" class="t" style="left:482.60px;top:79.17px;font-size:4.60px;line-height:5.98px;color:#2a2a2a;-webkit-text-stroke:0.05px currentColor;">18</span>
<div style="position:absolute;left:491.50px;top:78px;width:1px;height:1px;background:#b5b5b5"></div>
<div style="position:absolute;left:501.60px;top:77px;width:1px;height:2px;background:#8e8e8e"></div>
<div style="position:absolute;left:511.80px;top:78px;width:1px;height:1px;background:#b5b5b5"></div>
<div style="position:absolute;left:521.90px;top:77px;width:1px;height:4px;background:#6e6e6e"></div>
<span id="t26" class="t" style="left:523.20px;top:79.17px;font-size:4.60px;line-height:5.98px;color:#2a2a2a;-webkit-text-stroke:0.05px currentColor;">20</span>
<div style="position:absolute;left:532.10px;top:78px;width:1px;height:1px;background:#b5b5b5"></div>
<div style="position:absolute;left:542.20px;top:77px;width:1px;height:2px;background:#8e8e8e"></div>
<div style="position:absolute;left:158.90px;top:72.3px;width:0;height:0;border-top:2.400px solid transparent;border-bottom:2.400px solid transparent;border-left:3.300px solid #74b2e6"></div>
<div style="position:absolute;left:192.00px;top:72.3px;width:0;height:0;border-top:2.400px solid transparent;border-bottom:2.400px solid transparent;border-left:3.300px solid #74b2e6"></div>
<div style="position:absolute;left:212.10px;top:72.3px;width:0;height:0;border-top:2.400px solid transparent;border-bottom:2.400px solid transparent;border-left:3.300px solid #74b2e6"></div>
<div style="position:absolute;left:231.80px;top:72.3px;width:0;height:0;border-top:2.400px solid transparent;border-bottom:2.400px solid transparent;border-left:3.300px solid #74b2e6"></div>
<div style="position:absolute;left:252.00px;top:72.3px;width:0;height:0;border-top:2.400px solid transparent;border-bottom:2.400px solid transparent;border-left:3.300px solid #74b2e6"></div>
<div style="position:absolute;left:272.70px;top:72.3px;width:0;height:0;border-top:2.400px solid transparent;border-bottom:2.400px solid transparent;border-left:3.300px solid #74b2e6"></div>
<div style="position:absolute;left:293.20px;top:72.3px;width:0;height:0;border-top:2.400px solid transparent;border-bottom:2.400px solid transparent;border-left:3.300px solid #74b2e6"></div>
<div style="position:absolute;left:313.20px;top:72.3px;width:0;height:0;border-top:2.400px solid transparent;border-bottom:2.400px solid transparent;border-left:3.300px solid #74b2e6"></div>
<div style="position:absolute;left:333.20px;top:72.3px;width:0;height:0;border-top:2.400px solid transparent;border-bottom:2.400px solid transparent;border-left:3.300px solid #74b2e6"></div>
<div style="position:absolute;left:354.00px;top:72.3px;width:0;height:0;border-top:2.400px solid transparent;border-bottom:2.400px solid transparent;border-left:3.300px solid #74b2e6"></div>
<div style="position:absolute;left:374.00px;top:72.3px;width:0;height:0;border-top:2.400px solid transparent;border-bottom:2.400px solid transparent;border-left:3.300px solid #74b2e6"></div>
<div style="position:absolute;left:393.90px;top:72.3px;width:0;height:0;border-top:2.400px solid transparent;border-bottom:2.400px solid transparent;border-left:3.300px solid #74b2e6"></div>
<div style="position:absolute;left:149.1px;top:72.4px;width:4.4px;height:1.200px;background:#74b2e6"></div><div style="position:absolute;left:150.8px;top:72.4px;width:1px;height:4.600px;background:#74b2e6"></div>
<div style="position:absolute;left:174.60px;top:72.2px;width:0;height:0;border-left:2.700px solid transparent;border-right:2.700px solid transparent;border-top:3.900px solid #74b2e6"></div>
<div style="position:absolute;left:501.50px;top:72.2px;width:0;height:0;border-left:2.700px solid transparent;border-right:2.700px solid transparent;border-top:3.900px solid #74b2e6"></div>
<span id="t27" class="t" style="left:124.10px;top:376.85px;font-size:4.90px;line-height:6.37px;color:#2c2c2c;letter-spacing:0.191px;-webkit-text-stroke:0.06px currentColor;">Selected Words: 14&nbsp; Selected Chars: 112</span>
<span id="t28" class="t" style="left:268.20px;top:376.85px;font-size:4.90px;line-height:6.37px;color:#2c2c2c;letter-spacing:0.242px;-webkit-text-stroke:0.06px currentColor;">Page: 1 of 1</span>
<svg style="left:314.30px;top:377.8px" width="4" height="5" viewBox="0 0 4 5"><path d="M3.400 .5L.6 2.500l2.800 2z" fill="none" stroke="#8a8a8a" stroke-width=".5"/></svg>
<svg style="left:325.90px;top:377.8px" width="4" height="5" viewBox="0 0 4 5"><path d="M.6 .5l2.800 2-2.800 2z" fill="none" stroke="#8a8a8a" stroke-width=".5"/></svg>
<span id="t29" class="t" style="left:306.50px;top:84.67px;font-size:17.80px;line-height:20.00px;color:#bcd8e2;font-family:'DejaVu Sans','Liberation Sans',sans-serif;-webkit-text-stroke:.95px #7aa6b7;letter-spacing:-.4px;">List</span>
<div style="position:absolute;left:160.1px;top:115.30px;width:1.900px;height:1.900px;background:#ea7f42"></div>
<span id="t30" class="t" style="left:177.20px;top:112.27px;font-size:6.46px;line-height:9.20px;color:#234c66;font-family:'DejaVu Sans','Liberation Sans',sans-serif;letter-spacing:-0.011px;-webkit-text-stroke:0.04px currentColor;">Seacula quarta decima et quinta decima Eodem modo typi? Modo typi qui nunc nobis vident</span>
<span id="t31" class="t" style="left:177.20px;top:121.57px;font-size:6.46px;line-height:9.20px;color:#234c66;font-family:'DejaVu Sans','Liberation Sans',sans-serif;letter-spacing:0.005px;-webkit-text-stroke:0.04px currentColor;">parumclari. <span style="color:#e8854c;text-decoration:underline;text-decoration-color:rgba(232,133,76,.7);text-underline-offset:.8px;text-decoration-skip-ink:none">Quam littera gothica quam nunc putamus parum claram anteposuerit. Lorem ipsum.</span></span>
<div style="position:absolute;left:160.1px;top:140.20px;width:1.900px;height:1.900px;background:#ea7f42"></div>
<span id="t32" class="t" style="left:177.20px;top:137.27px;font-size:6.46px;line-height:9.20px;color:#234c66;font-family:'DejaVu Sans','Liberation Sans',sans-serif;letter-spacing:-0.001px;-webkit-text-stroke:0.04px currentColor;">Ligula suspendisse nulla pretium, rhoncus tempor placerat fermentum, enim integer ad vestibu</span>
<span id="t33" class="t" style="left:177.20px;top:146.47px;font-size:6.46px;line-height:9.20px;color:#234c66;font-family:'DejaVu Sans','Liberation Sans',sans-serif;letter-spacing:0.011px;-webkit-text-stroke:0.04px currentColor;">volutpat. Nisl rhoncus turpis est, vel elit, congue wisi enim nunc ultricies sit, magna tincidunt.</span>
<div style="position:absolute;left:160.1px;top:164.30px;width:1.900px;height:1.900px;background:#ea7f42"></div>
<span id="t34" class="t" style="left:177.20px;top:161.37px;font-size:6.46px;line-height:9.20px;color:#234c66;font-family:'DejaVu Sans','Liberation Sans',sans-serif;letter-spacing:0.003px;-webkit-text-stroke:0.04px currentColor;">Braid,</span>
<div style="position:absolute;left:198.3px;top:159.5px;width:74.9px;height:9px;background:#08202e"></div>
<span id="t35" class="t" style="left:198.90px;top:161.37px;font-size:6.46px;line-height:9.20px;color:#2a9ad6;font-family:'DejaVu Sans','Liberation Sans',sans-serif;letter-spacing:-0.044px;-webkit-text-stroke:0.04px currentColor;">yop quiel geg ba solaly</span>
<span id="t36" class="t" style="left:275.90px;top:161.37px;font-size:6.46px;line-height:9.20px;color:#234c66;font-family:'DejaVu Sans','Liberation Sans',sans-serif;letter-spacing:0.014px;-webkit-text-stroke:0.04px currentColor;">rasponsubla rof trenzur sala ent dusgrubuguon. Offoctivo</span>
<span id="t37" class="t" style="left:177.20px;top:170.37px;font-size:6.46px;line-height:9.20px;color:#234c66;font-family:'DejaVu Sans','Liberation Sans',sans-serif;letter-spacing:0.016px;-webkit-text-stroke:0.04px currentColor;">immoriatoly, hawrgasi pwicos asi sirucor. <span style="color:#2fa3df">Thas sirutciun applios tyu thuso itoms. Eget habitasse</span></span>
<span id="t38" class="t" style="left:177.20px;top:179.57px;font-size:6.46px;line-height:9.20px;color:#234c66;font-family:'DejaVu Sans','Liberation Sans',sans-serif;letter-spacing:0.000px;-webkit-text-stroke:0.04px currentColor;"><span style="color:#2fa3df">elementum est,</span> ipsum purus pede porttitor class, ut adipiscing, aliquet sed auctor, imperdiet arcu</span>
<span id="t39" class="t" style="left:177.20px;top:188.77px;font-size:6.46px;line-height:9.20px;color:#234c66;font-family:'DejaVu Sans','Liberation Sans',sans-serif;letter-spacing:0.033px;-webkit-text-stroke:0.04px currentColor;">per diam dapibus libero duis.</span>
<div style="position:absolute;left:160.1px;top:209.80px;width:1.900px;height:1.900px;background:#ea7f42"></div>
<span id="t40" class="t" style="left:177.20px;top:206.87px;font-size:6.46px;line-height:9.20px;color:#234c66;font-family:'DejaVu Sans','Liberation Sans',sans-serif;letter-spacing:-0.006px;-webkit-text-stroke:0.04px currentColor;">Modo typi qui nunc nobis videntur parum clari. Quam littera gothica quam nunc putamus parum</span>
<span id="t41" class="t" style="left:177.20px;top:218.67px;font-size:6.46px;line-height:9.20px;color:#234c66;font-family:'DejaVu Sans','Liberation Sans',sans-serif;letter-spacing:-0.042px;-webkit-text-stroke:0.04px currentColor;">claram anteposuerit. Lorem ipsum dolor sit amet, ligula suspendisse nulla pretium, rhoncus tempor</span>
<span id="t42" class="t" style="left:177.20px;top:230.57px;font-size:6.46px;line-height:9.20px;color:#234c66;font-family:'DejaVu Sans','Liberation Sans',sans-serif;letter-spacing:-0.018px;-webkit-text-stroke:0.04px currentColor;">placerat fermentum, <span style="text-decoration:line-through">enim integer ad vestibulum volutpat. Nisi rhoncus turpis est, vel elit, congue</span></span>
<span id="t43" class="t" style="left:177.20px;top:242.17px;font-size:6.46px;line-height:9.20px;color:#234c66;font-family:'DejaVu Sans','Liberation Sans',sans-serif;letter-spacing:0.014px;-webkit-text-stroke:0.04px currentColor;"><span style="text-decoration:line-through">wisi enim nunc ultricies sit, magna tincidunt. Duis montes,</span> tellus lobortis lacus amet arcu et.</span>
<svg style="left:159.2px;top:258.80px" width="4" height="5" viewBox="0 0 4 5"><path d="M.5 3l.9 1.300L3.400 .6" fill="none" stroke="#e8814a" stroke-width=".95"/></svg>
<span id="t44" class="t" style="left:177.20px;top:257.77px;font-size:6.46px;line-height:9.20px;color:#234c66;font-family:'DejaVu Sans','Liberation Sans',sans-serif;letter-spacing:-0.046px;-webkit-text-stroke:0.04px currentColor;">Lorem ipsum dolor sit amet, ligula suspendisse nulla pretium, rhoncus tempor placerat fermentum,</span>
<span id="t45" class="t" style="left:177.20px;top:267.07px;font-size:6.46px;line-height:9.20px;color:#234c66;font-family:'DejaVu Sans','Liberation Sans',sans-serif;letter-spacing:-0.038px;-webkit-text-stroke:0.04px currentColor;">enim integer ad vestibulum volutpat. <span style="background:#19e6f0;font-weight:bold;text-decoration:underline line-through;padding:1.300px 0 1.100px">Nisl rhoncus turpis est, vel elit</span>, congue wisi enim nunc</span>
<span id="t46" class="t" style="left:177.20px;top:275.97px;font-size:6.46px;line-height:9.20px;color:#234c66;font-family:'DejaVu Sans','Liberation Sans',sans-serif;letter-spacing:0.009px;-webkit-text-stroke:0.04px currentColor;">ultricies sit, magna tincidunt. Duis montes, tellus lobortis lacus amet arcu et.</span>
<svg style="left:159.2px;top:294.60px" width="4" height="5" viewBox="0 0 4 5"><path d="M.5 3l.9 1.300L3.400 .6" fill="none" stroke="#e8814a" stroke-width=".95"/></svg>
<span id="t47" class="t" style="left:177.20px;top:293.67px;font-size:6.46px;line-height:9.20px;color:#234c66;font-family:'DejaVu Sans','Liberation Sans',sans-serif;letter-spacing:0.321px;-webkit-text-stroke:0.04px currentColor;text-decoration:underline;text-decoration-color:rgba(35,76,102,.62);text-underline-offset:1.100px;text-decoration-skip-ink:none;text-shadow:0 1.700px .4px rgba(120,195,230,.33);">Eget habitasse elementum est, ipsum purus pede</span>
<span id="t48" class="t" style="left:177.20px;top:305.87px;font-size:6.46px;line-height:9.20px;color:#234c66;font-family:'DejaVu Sans','Liberation Sans',sans-serif;letter-spacing:0.344px;-webkit-text-stroke:0.04px currentColor;text-decoration:underline;text-decoration-color:rgba(35,76,102,.62);text-underline-offset:1.100px;text-decoration-skip-ink:none;text-shadow:0 1.700px .4px rgba(120,195,230,.33);">porttitor class, ut adipiscing, aliqwuet sed auctord,</span>
<span id="t49" class="t" style="left:177.20px;top:317.87px;font-size:6.46px;line-height:9.20px;color:#234c66;font-family:'DejaVu Sans','Liberation Sans',sans-serif;letter-spacing:0.332px;-webkit-text-stroke:0.04px currentColor;text-decoration:underline;text-decoration-color:rgba(35,76,102,.62);text-underline-offset:1.100px;text-decoration-skip-ink:none;text-shadow:0 1.700px .4px rgba(120,195,230,.33);">imperdiet arcu per diam dapibus libero arcuts duis.</span>
<svg style="left:159.2px;top:338.60px" width="4" height="5" viewBox="0 0 4 5"><path d="M.5 3l.9 1.300L3.400 .6" fill="none" stroke="#e8814a" stroke-width=".95"/></svg>
<div style="position:absolute;left:176.4px;top:335.7px;width:190px;height:10.2px;background:#c9c9c9"></div>
<span id="t50" class="t" style="left:177.20px;top:337.67px;font-size:6.46px;line-height:9.20px;color:#234c66;font-family:'DejaVu Sans','Liberation Sans',sans-serif;letter-spacing:-0.006px;-webkit-text-stroke:0.04px currentColor;">Braid, yop quiel geg ba solaly rasponsubla rof trenzur sala</span>
<span id="t51" class="t" style="left:177.60px;top:354.63px;font-size:10.20px;line-height:12.00px;color:#0f3850;font-weight:200;font-family:'DejaVu Sans Light','DejaVu Sans','Liberation Sans',sans-serif;letter-spacing:-0.810px;-webkit-text-stroke:0.12px currentColor;">Ent dusgrubuguon. Offoctivo immoriatoly,</span>
<div style="position:absolute;left:30.9px;top:98.7px;width:116.0px;height:177.2px;border-radius:2.500px 2.500px 0 0;background:#ededed;box-shadow:0 5px 12px 1px rgba(0,0,0,.5),0 0 0 .5px rgba(0,0,0,.45);overflow:hidden">
<div style="position:absolute;left:0;top:0;width:100%;height:8px;background:linear-gradient(180deg,#f6f6f6,#e6e6e6);border-bottom:.6px solid #b4b4b4"></div>
<div style="position:absolute;left:0;top:8px;width:100%;height:11.9px;background:linear-gradient(180deg,#d4d4d4,#c2c2c2);border-bottom:.7px solid #8c8c8c"></div>
<div style="position:absolute;left:19.6px;top:8px;width:19.1px;height:11.3px;background:linear-gradient(180deg,#d6e6f8,#a9c9ee);box-shadow:0 0 0 .5px #8a9bb0"></div>
<div style="position:absolute;left:2.100px;top:8px;width:.5px;height:11.3px;background:#aaa"></div>
</div>
<div style="position:absolute;left:33.80px;top:99.90px;width:5px;height:5px;border-radius:50%;background:linear-gradient(180deg,#dedede,#f4f4f4);box-shadow:0 0 0 .5px #a9a9a9"></div>
<div style="position:absolute;left:43.00px;top:99.90px;width:5px;height:5px;border-radius:50%;background:linear-gradient(180deg,#dedede,#f4f4f4);box-shadow:0 0 0 .5px #a9a9a9"></div>
<div style="position:absolute;left:52.30px;top:99.90px;width:5px;height:5px;border-radius:50%;background:linear-gradient(180deg,#dedede,#f4f4f4);box-shadow:0 0 0 .5px #a9a9a9"></div>
<span id="t52" class="t" style="left:88.60px;transform:translateX(-50%);top:99.44px;font-size:5.60px;line-height:7.28px;color:#808080;-webkit-text-stroke:0.03px currentColor;">Text</span>
<svg style="left:37.2px;top:107.8px" width="8" height="10" viewBox="0 0 8 10"><path d="M.8 .6h4l2.400 2.400v6.400h-6.400z" fill="#fafafa" stroke="#9a9a9a" stroke-width=".5"/><path d="M4.800 .6v2.400h2.400" fill="none" stroke="#9a9a9a" stroke-width=".5"/><path d="M2 5h4M2 6.400h4M2 7.800h4" stroke="#c8c8c8" stroke-width=".4"/></svg>
<span id="t53" class="t" style="left:59.60px;transform:translateX(-50%);top:107.26px;font-size:11.30px;line-height:11.00px;color:#1a1a1a;font-family:'Liberation Serif',serif;">T</span>
<span id="t54" class="t" style="left:34.80px;top:126.25px;font-size:6.00px;line-height:7.80px;color:#111;font-weight:bold;letter-spacing:0.020px;">Spacing</span>
<span id="t55" class="t" style="left:41.80px;top:133.90px;font-size:5.10px;line-height:6.63px;color:#111;letter-spacing:0.038px;">Character</span>
<div style="position:absolute;left:42.40px;top:141.90px;width:61.40px;height:2px;border-radius:1px;background:linear-gradient(180deg,#878787,#bcbcbc);box-shadow:0 .5px 0 #fafafa"></div>
<svg style="left:61.00px;top:140.30px" width="6.4" height="7.8" viewBox="0 0 6 7.3"><path d="M.5 1.200Q.5 .4 1.300 .4h3.400Q5.500 .4 5.500 1.200v3L3 6.900L.5 4.200z" fill="#f4f4f4" stroke="#7e7e7e" stroke-width=".5"/></svg>
<div style="position:absolute;left:72.75px;top:147.30px;width:.5px;height:1.300px;background:#888"></div>
<div style="position:absolute;left:109.30px;top:138.40px;width:21.30px;height:8.50px;background:#fff;box-shadow:0 0 0 .6px #a2a2a2,inset 0 .7px .6px rgba(0,0,0,.22)"></div>
<span id="t56" class="t" style="left:112.50px;top:140.11px;font-size:5.30px;line-height:6.89px;color:#111;">0.00</span>
<div style="position:absolute;left:132.80px;top:137.80px;width:5.90px;height:9.60px;border-radius:2.800px;background:linear-gradient(180deg,#fff,#e4e4e4);box-shadow:0 0 0 .6px #9a9a9a"></div>
<div style="position:absolute;left:134.65px;top:140.10px;border-left:1.100px solid transparent;border-right:1.100px solid transparent;border-bottom:1.500px solid #444;width:0;height:0"></div>
<div style="position:absolute;left:134.65px;top:143.60px;border-left:1.100px solid transparent;border-right:1.100px solid transparent;border-top:1.500px solid #444;width:0;height:0"></div>
<span id="t57" class="t" style="left:41.80px;top:153.60px;font-size:5.10px;line-height:6.63px;color:#111;letter-spacing:-0.056px;">Line</span>
<span id="t58" class="t" style="left:64.20px;transform:translateX(-50%);top:154.38px;font-size:4.30px;line-height:5.59px;color:#222;">1</span>
<span id="t59" class="t" style="left:82.70px;transform:translateX(-50%);top:154.38px;font-size:4.30px;line-height:5.59px;color:#222;">2</span>
<span id="t60" class="t" style="left:101.00px;transform:translateX(-50%);top:154.38px;font-size:4.30px;line-height:5.59px;color:#222;">3</span>
<div style="position:absolute;left:42.40px;top:160.80px;width:61.40px;height:2px;border-radius:1px;background:linear-gradient(180deg,#878787,#bcbcbc);box-shadow:0 .5px 0 #fafafa"></div>
<svg style="left:61.00px;top:159.20px" width="6.4" height="7.8" viewBox="0 0 6 7.3"><path d="M.5 1.200Q.5 .4 1.300 .4h3.400Q5.500 .4 5.500 1.200v3L3 6.900L.5 4.200z" fill="#f4f4f4" stroke="#7e7e7e" stroke-width=".5"/></svg>
<div style="position:absolute;left:45.45px;top:166.20px;width:.5px;height:1.300px;background:#888"></div>
<div style="position:absolute;left:54.65px;top:166.20px;width:.5px;height:1.300px;background:#888"></div>
<div style="position:absolute;left:63.95px;top:166.20px;width:.5px;height:1.300px;background:#888"></div>
<div style="position:absolute;left:73.15px;top:166.20px;width:.5px;height:1.300px;background:#888"></div>
<div style="position:absolute;left:82.45px;top:166.20px;width:.5px;height:1.300px;background:#888"></div>
<div style="position:absolute;left:91.65px;top:166.20px;width:.5px;height:1.300px;background:#888"></div>
<div style="position:absolute;left:100.75px;top:166.20px;width:.5px;height:1.300px;background:#888"></div>
<div style="position:absolute;left:109.30px;top:157.40px;width:21.30px;height:8.40px;background:#fff;box-shadow:0 0 0 .6px #a2a2a2,inset 0 .7px .6px rgba(0,0,0,.22)"></div>
<span id="t61" class="t" style="left:112.50px;top:159.06px;font-size:5.30px;line-height:6.89px;color:#111;">1.20</span>
<div style="position:absolute;left:132.80px;top:156.80px;width:5.90px;height:9.60px;border-radius:2.800px;background:linear-gradient(180deg,#fff,#e4e4e4);box-shadow:0 0 0 .6px #9a9a9a"></div>
<div style="position:absolute;left:134.65px;top:159.10px;border-left:1.100px solid transparent;border-right:1.100px solid transparent;border-bottom:1.500px solid #444;width:0;height:0"></div>
<div style="position:absolute;left:134.65px;top:162.60px;border-left:1.100px solid transparent;border-right:1.100px solid transparent;border-top:1.500px solid #444;width:0;height:0"></div>
<span id="t62" class="t" style="left:41.80px;top:173.20px;font-size:5.10px;line-height:6.63px;color:#111;letter-spacing:0.039px;">Before Paragraph</span>
<div style="position:absolute;left:42.40px;top:181.20px;width:61.40px;height:2px;border-radius:1px;background:linear-gradient(180deg,#878787,#bcbcbc);box-shadow:0 .5px 0 #fafafa"></div>
<svg style="left:50.10px;top:179.60px" width="6.4" height="7.8" viewBox="0 0 6 7.3"><path d="M.5 1.200Q.5 .4 1.300 .4h3.400Q5.500 .4 5.500 1.200v3L3 6.900L.5 4.200z" fill="#f4f4f4" stroke="#7e7e7e" stroke-width=".5"/></svg>
<div style="position:absolute;left:45.45px;top:186.60px;width:.5px;height:1.300px;background:#888"></div>
<div style="position:absolute;left:100.75px;top:186.60px;width:.5px;height:1.300px;background:#888"></div>
<div style="position:absolute;left:109.30px;top:178.10px;width:21.30px;height:8.30px;background:#fff;box-shadow:0 0 0 .6px #a2a2a2,inset 0 .7px .6px rgba(0,0,0,.22)"></div>
<span id="t63" class="t" style="left:112.50px;top:179.71px;font-size:5.30px;line-height:6.89px;color:#111;">14</span>
<div style="position:absolute;left:132.80px;top:177.40px;width:5.90px;height:9.60px;border-radius:2.800px;background:linear-gradient(180deg,#fff,#e4e4e4);box-shadow:0 0 0 .6px #9a9a9a"></div>
<div style="position:absolute;left:134.65px;top:179.70px;border-left:1.100px solid transparent;border-right:1.100px solid transparent;border-bottom:1.500px solid #444;width:0;height:0"></div>
<div style="position:absolute;left:134.65px;top:183.20px;border-left:1.100px solid transparent;border-right:1.100px solid transparent;border-top:1.500px solid #444;width:0;height:0"></div>
<span id="t64" class="t" style="left:41.80px;top:193.20px;font-size:5.10px;line-height:6.63px;color:#111;letter-spacing:0.136px;">After Paragraph</span>
<div style="position:absolute;left:42.40px;top:201.60px;width:61.40px;height:2px;border-radius:1px;background:linear-gradient(180deg,#878787,#bcbcbc);box-shadow:0 .5px 0 #fafafa"></div>
<svg style="left:42.50px;top:200.00px" width="6.4" height="7.8" viewBox="0 0 6 7.3"><path d="M.5 1.200Q.5 .4 1.300 .4h3.400Q5.500 .4 5.500 1.200v3L3 6.900L.5 4.200z" fill="#f4f4f4" stroke="#7e7e7e" stroke-width=".5"/></svg>
<div style="position:absolute;left:100.75px;top:207.00px;width:.5px;height:1.300px;background:#888"></div>
<div style="position:absolute;left:109.30px;top:197.60px;width:21.30px;height:8.30px;background:#fff;box-shadow:0 0 0 .6px #a2a2a2,inset 0 .7px .6px rgba(0,0,0,.22)"></div>
<span id="t65" class="t" style="left:112.50px;top:199.21px;font-size:5.30px;line-height:6.89px;color:#111;">0</span>
<div style="position:absolute;left:132.80px;top:196.90px;width:5.90px;height:9.60px;border-radius:2.800px;background:linear-gradient(180deg,#fff,#e4e4e4);box-shadow:0 0 0 .6px #9a9a9a"></div>
<div style="position:absolute;left:134.65px;top:199.20px;border-left:1.100px solid transparent;border-right:1.100px solid transparent;border-bottom:1.500px solid #444;width:0;height:0"></div>
<div style="position:absolute;left:134.65px;top:202.70px;border-left:1.100px solid transparent;border-right:1.100px solid transparent;border-top:1.500px solid #444;width:0;height:0"></div>
<div style="position:absolute;left:35.7px;top:216.3px;width:103px;height:.7px;background:#b9b9b9;box-shadow:0 .6px 0 #fafafa"></div>
<span id="t66" class="t" style="left:34.80px;top:221.85px;font-size:6.00px;line-height:7.80px;color:#111;font-weight:bold;letter-spacing:-0.036px;">Indent</span>
<span id="t67" class="t" style="left:41.80px;top:232.00px;font-size:5.10px;line-height:6.63px;color:#111;letter-spacing:0.143px;">First Line</span>
<span id="t68" class="t" style="left:75.10px;top:232.00px;font-size:5.10px;line-height:6.63px;color:#111;letter-spacing:0.102px;">Left</span>
<span id="t69" class="t" style="left:108.80px;top:232.00px;font-size:5.10px;line-height:6.63px;color:#111;letter-spacing:0.036px;">Right</span>
<div style="position:absolute;left:42.40px;top:241.90px;width:21.20px;height:8.50px;background:#fff;box-shadow:0 0 0 .6px #a2a2a2,inset 0 .7px .6px rgba(0,0,0,.22)"></div>
<span id="t70" class="t" style="left:45.60px;top:243.61px;font-size:5.30px;line-height:6.89px;color:#111;">-0.00</span>
<div style="position:absolute;left:66.00px;top:241.40px;width:5.90px;height:9.60px;border-radius:2.800px;background:linear-gradient(180deg,#fff,#e4e4e4);box-shadow:0 0 0 .6px #9a9a9a"></div>
<div style="position:absolute;left:67.85px;top:243.70px;border-left:1.100px solid transparent;border-right:1.100px solid transparent;border-bottom:1.500px solid #444;width:0;height:0"></div>
<div style="position:absolute;left:67.85px;top:247.20px;border-left:1.100px solid transparent;border-right:1.100px solid transparent;border-top:1.500px solid #444;width:0;height:0"></div>
<div style="position:absolute;left:75.50px;top:241.90px;width:21.20px;height:8.50px;background:#fff;box-shadow:0 0 0 .6px #a2a2a2,inset 0 .7px .6px rgba(0,0,0,.22)"></div>
<span id="t71" class="t" style="left:78.70px;top:243.61px;font-size:5.30px;line-height:6.89px;color:#111;">1.27</span>
<div style="position:absolute;left:99.30px;top:241.40px;width:5.90px;height:9.60px;border-radius:2.800px;background:linear-gradient(180deg,#fff,#e4e4e4);box-shadow:0 0 0 .6px #9a9a9a"></div>
<div style="position:absolute;left:101.15px;top:243.70px;border-left:1.100px solid transparent;border-right:1.100px solid transparent;border-bottom:1.500px solid #444;width:0;height:0"></div>
<div style="position:absolute;left:101.15px;top:247.20px;border-left:1.100px solid transparent;border-right:1.100px solid transparent;border-top:1.500px solid #444;width:0;height:0"></div>
<div style="position:absolute;left:109.30px;top:241.90px;width:21.30px;height:8.50px;background:#fff;box-shadow:0 0 0 .6px #a2a2a2,inset 0 .7px .6px rgba(0,0,0,.22)"></div>
<span id="t72" class="t" style="left:112.50px;top:243.61px;font-size:5.30px;line-height:6.89px;color:#111;">0.00</span>
<div style="position:absolute;left:132.80px;top:241.40px;width:5.90px;height:9.60px;border-radius:2.800px;background:linear-gradient(180deg,#fff,#e4e4e4);box-shadow:0 0 0 .6px #9a9a9a"></div>
<div style="position:absolute;left:134.65px;top:243.70px;border-left:1.100px solid transparent;border-right:1.100px solid transparent;border-bottom:1.500px solid #444;width:0;height:0"></div>
<div style="position:absolute;left:134.65px;top:247.20px;border-left:1.100px solid transparent;border-right:1.100px solid transparent;border-top:1.500px solid #444;width:0;height:0"></div>
<div style="position:absolute;left:35.7px;top:256.5px;width:103px;height:.7px;background:#b9b9b9;box-shadow:0 .6px 0 #fafafa"></div>
<span id="t73" class="t" style="left:34.80px;top:263.02px;font-size:5.90px;line-height:7.67px;color:#111;font-weight:bold;letter-spacing:-0.063px;">Baseline Shift</span>
<div style="position:absolute;left:84.20px;top:261.10px;width:49.70px;height:9.20px;border-radius:2px;background:linear-gradient(180deg,#f6f6f6,#e2e2e2 50%,#d2d2d2);box-shadow:0 0 0 .6px #8e8e8e"></div>
<div style="position:absolute;left:100.30px;top:261.10px;width:.6px;height:9.20px;background:#9a9a9a"></div>
<div style="position:absolute;left:117.00px;top:261.10px;width:.6px;height:9.20px;background:#9a9a9a"></div>
<svg style="left:89.4px;top:262.6px" width="6" height="7" viewBox="0 0 6 7"><path d="M3 .4L.8 3h1.500v3.200h1.400V3h1.500z" fill="#444"/></svg>
<div style="position:absolute;left:106px;top:264.2px;width:5.600px;height:1px;background:#444"></div><div style="position:absolute;left:106px;top:266.4px;width:5.600px;height:1px;background:#444"></div>
<svg style="left:122.6px;top:262.6px" width="6" height="7" viewBox="0 0 6 7"><path d="M3 6.600L.8 4h1.500V.8h1.400V4h1.500z" fill="#666"/></svg>
<div style="position:absolute;left:439.8px;top:213.3px;width:228.4px;height:200.0px;border-radius:2.500px 2.500px 0 0;background:#e9e9e9;box-shadow:0 5px 12px 1px rgba(0,0,0,.5),0 0 0 .5px rgba(0,0,0,.45);overflow:hidden">
<div style="position:absolute;left:0;top:0;width:100%;height:7.700px;background:linear-gradient(180deg,#f6f6f6,#e4e4e4);border-bottom:.6px solid #b4b4b4"></div>
<div style="position:absolute;left:0;top:7.700px;width:100%;height:37.5px;background:#fff;border-bottom:.7px solid #b0b0b0"></div>
</div>
<div style="position:absolute;left:444.50px;top:214.60px;width:5px;height:5px;border-radius:50%;background:linear-gradient(180deg,#dedede,#f4f4f4);box-shadow:0 0 0 .5px #a9a9a9"></div>
<div style="position:absolute;left:453.60px;top:214.60px;width:5px;height:5px;border-radius:50%;background:linear-gradient(180deg,#dedede,#f4f4f4);box-shadow:0 0 0 .5px #a9a9a9"></div>
<div style="position:absolute;left:462.40px;top:214.60px;width:5px;height:5px;border-radius:50%;background:linear-gradient(180deg,#dedede,#f4f4f4);box-shadow:0 0 0 .5px #a9a9a9"></div>
<span id="t74" class="t" style="left:554.10px;transform:translateX(-50%);top:213.94px;font-size:5.60px;line-height:7.28px;color:#808080;-webkit-text-stroke:0.03px currentColor;">Fonts</span>
<span id="t75" class="t" style="left:520.00px;top:235.00px;font-size:6.90px;line-height:8.97px;color:#000;font-weight:200;font-family:'DejaVu Sans Light','DejaVu Sans',sans-serif;letter-spacing:-0.352px;-webkit-text-stroke:0.1px currentColor;">Helvetica Neue LT Pro</span>
<span id="t76" class="t" style="left:482.90px;top:249.56px;font-size:5.30px;line-height:6.89px;color:#8a8a8a;letter-spacing:0.285px;-webkit-text-stroke:0px currentColor;">Helvetica Neue LT Pro 33 Thin Extended 13.0 pt.</span>
<div style="position:absolute;left:455.00px;top:264.10px;width:19.60px;height:9.30px;background:linear-gradient(180deg,#ffffff,#f2f2f2 50%,#e2e2e2);box-shadow:0 0 0 .6px #9a9a9a"></div>
<span id="t77" class="t" style="left:462.30px;transform:translateX(-50%);top:264.56px;font-size:7.20px;line-height:9.00px;color:#222;font-family:'Liberation Sans',sans-serif;-webkit-text-stroke:0px currentColor;"><u>T</u></span>
<div style="position:absolute;left:468.00px;top:268.00px;border-left:1.500px solid transparent;border-right:1.500px solid transparent;border-top:2px solid #333;width:0;height:0"></div>
<div style="position:absolute;left:477.50px;top:264.10px;width:19.50px;height:9.30px;background:linear-gradient(180deg,#ffffff,#f2f2f2 50%,#e2e2e2);box-shadow:0 0 0 .6px #9a9a9a"></div>
<span id="t78" class="t" style="left:484.80px;transform:translateX(-50%);top:264.56px;font-size:7.20px;line-height:9.00px;color:#222;font-family:'Liberation Sans',sans-serif;-webkit-text-stroke:0px currentColor;"><s>T</s></span>
<div style="position:absolute;left:490.70px;top:268.00px;border-left:1.500px solid transparent;border-right:1.500px solid transparent;border-top:2px solid #333;width:0;height:0"></div>
<div style="position:absolute;left:500.80px;top:264.10px;width:19.60px;height:9.30px;background:linear-gradient(180deg,#ffffff,#f2f2f2 50%,#e2e2e2);box-shadow:0 0 0 .6px #9a9a9a"></div>
<span id="t79" class="t" style="left:506.00px;transform:translateX(-50%);top:264.56px;font-size:7.20px;line-height:9.00px;color:#222;font-family:'Liberation Sans',sans-serif;-webkit-text-stroke:0px currentColor;">T</span>
<div style="position:absolute;left:510.6px;top:265.2px;width:8px;height:7.100px;background:#b4ea5a;box-shadow:0 0 0 .4px #8a8a8a"></div>
<div style="position:absolute;left:528.40px;top:264.10px;width:20.20px;height:9.30px;background:linear-gradient(180deg,#ffffff,#f2f2f2 50%,#e2e2e2);box-shadow:0 0 0 .6px #9a9a9a"></div>
<span id="t80" class="t" style="left:538.40px;transform:translateX(-50%);top:264.63px;font-size:7.60px;line-height:9.00px;color:#555;font-family:'Liberation Serif',serif;-webkit-text-stroke:0px currentColor;"><s>T</s></span>
<div style="position:absolute;left:552.60px;top:270.4px;width:19.00px;height:1.600px;border-radius:1px;background:linear-gradient(180deg,#8e8e8e,#c9c9c9)"></div>
<div style="position:absolute;left:559.90px;top:269.4px;width:1.200px;height:3.400px;background:#f4f4f4;box-shadow:0 0 0 .5px #777"></div>
<div style="position:absolute;left:576.00px;top:270.4px;width:18.40px;height:1.600px;border-radius:1px;background:linear-gradient(180deg,#8e8e8e,#c9c9c9)"></div>
<div style="position:absolute;left:578.90px;top:269.4px;width:1.200px;height:3.400px;background:#f4f4f4;box-shadow:0 0 0 .5px #777"></div>
<div style="position:absolute;left:598.80px;top:270.4px;width:18.50px;height:1.600px;border-radius:1px;background:linear-gradient(180deg,#8e8e8e,#c9c9c9)"></div>
<div style="position:absolute;left:605.40px;top:269.4px;width:1.200px;height:3.400px;background:#f4f4f4;box-shadow:0 0 0 .5px #777"></div>
<span id="t81" class="t" style="left:562.20px;transform:translateX(-50%);top:263.99px;font-size:3.60px;line-height:4.68px;color:#999;">A</span>
<div style="position:absolute;left:583.4px;top:262.8px;width:3.800px;height:3.600px;border-radius:.8px;background:#f4f4f4;box-shadow:0 0 0 .5px #999"></div>
<div style="position:absolute;left:606.8px;top:263.2px;width:3px;height:3px;border-radius:.8px;background:#f4f4f4;box-shadow:0 0 0 .5px #aaa"></div>
<div style="position:absolute;left:554.2px;top:260.4px;width:0;height:0;border-left:1.300px solid transparent;border-right:1.300px solid transparent;border-bottom:1.300px solid #555"></div>
<div style="position:absolute;left:624.6px;top:264.6px;width:7.600px;height:7.600px;border-radius:50%;background:linear-gradient(180deg,#fff,#e6e6e6);box-shadow:0 0 0 .6px #8a8a8a"></div><div style="position:absolute;left:629.4px;top:269.6px;width:1.300px;height:1.300px;border-radius:50%;background:#555"></div>
<span id="t82" class="t" style="left:636.00px;top:266.00px;font-size:5.80px;line-height:7.54px;color:#222;">31</span>
<span id="t83" class="t" style="left:443.10px;top:279.53px;font-size:5.20px;line-height:6.76px;color:#111;letter-spacing:0.233px;-webkit-text-stroke:0.07px currentColor;">Collection</span>
<span id="t84" class="t" style="left:506.90px;top:279.53px;font-size:5.20px;line-height:6.76px;color:#111;letter-spacing:0.133px;-webkit-text-stroke:0.07px currentColor;">Family</span>
<span id="t85" class="t" style="left:571.40px;top:279.53px;font-size:5.20px;line-height:6.76px;color:#111;letter-spacing:0.204px;-webkit-text-stroke:0.07px currentColor;">Typeface</span>
<span id="t86" class="t" style="left:636.40px;top:279.53px;font-size:5.20px;line-height:6.76px;color:#111;-webkit-text-stroke:0.07px currentColor;">Size</span>
<div style="position:absolute;left:442.00px;top:286.60px;width:61.80px;height:105.70px;background:#fff;box-shadow:0 0 0 .6px #b2b2b2"></div>
<div style="position:absolute;left:505.60px;top:286.60px;width:62.40px;height:105.70px;background:#fff;box-shadow:0 0 0 .6px #b2b2b2"></div>
<div style="position:absolute;left:570.00px;top:286.60px;width:62.60px;height:105.70px;background:#fff;box-shadow:0 0 0 .6px #b2b2b2"></div>
<div style="position:absolute;left:634.80px;top:286.60px;width:25.20px;height:105.70px;background:#fff;box-shadow:0 0 0 .6px #b2b2b2"></div>
<div style="position:absolute;left:442.00px;top:286.95px;width:61.80px;height:9.10px;background:#d2d2d2"></div>
<span id="t87" class="t" style="left:444.40px;top:288.93px;font-size:5.20px;line-height:6.76px;color:#111;-webkit-text-stroke:0.08px currentColor;">All Fonts</span>
<span id="t88" class="t" style="left:444.40px;top:296.65px;font-size:4.90px;line-height:6.37px;color:#111;-webkit-text-stroke:0px currentColor;">简体中文</span>
<span id="t89" class="t" style="left:444.40px;top:307.13px;font-size:5.20px;line-height:6.76px;color:#111;-webkit-text-stroke:0.08px currentColor;">Favorites</span>
<span id="t90" class="t" style="left:444.40px;top:316.23px;font-size:5.20px;line-height:6.76px;color:#111;-webkit-text-stroke:0.08px currentColor;">Recently Used</span>
<span id="t91" class="t" style="left:444.40px;top:325.33px;font-size:5.20px;line-height:6.76px;color:#111;-webkit-text-stroke:0.08px currentColor;">PDF</span>
<span id="t92" class="t" style="left:444.40px;top:333.05px;font-size:4.90px;line-height:6.37px;color:#111;-webkit-text-stroke:0px currentColor;">等宽</span>
<span id="t93" class="t" style="left:444.40px;top:342.15px;font-size:4.90px;line-height:6.37px;color:#111;-webkit-text-stroke:0px currentColor;">固定宽度</span>
<span id="t94" class="t" style="left:444.40px;top:351.25px;font-size:4.90px;line-height:6.37px;color:#111;-webkit-text-stroke:0px currentColor;">经典</span>
<span id="t95" class="t" style="left:444.40px;top:360.35px;font-size:4.90px;line-height:6.37px;color:#111;-webkit-text-stroke:0px currentColor;">趣味</span>
<span id="t96" class="t" style="left:444.40px;top:369.45px;font-size:4.90px;line-height:6.37px;color:#111;-webkit-text-stroke:0px currentColor;">网页</span>
<span id="t97" class="t" style="left:444.40px;top:378.55px;font-size:4.90px;line-height:6.37px;color:#111;-webkit-text-stroke:0px currentColor;">现代</span>
<div style="position:absolute;left:505.60px;top:286.60px;width:62.40px;height:9.10px;overflow:hidden">
<span id="t98" class="t" style="left:2.00px;top:-1.07px;font-size:5.20px;line-height:6.76px;color:#111;-webkit-text-stroke:0.08px currentColor;">Gungseo</span>
</div>
<span id="t99" class="t" style="left:507.60px;top:294.63px;font-size:5.20px;line-height:6.76px;color:#111;-webkit-text-stroke:0.08px currentColor;">Gurmukhi MN</span>
<span id="t100" class="t" style="left:507.60px;top:303.73px;font-size:5.20px;line-height:6.76px;color:#111;-webkit-text-stroke:0.08px currentColor;">Gurmukhi MT</span>
<span id="t101" class="t" style="left:507.60px;top:312.83px;font-size:5.20px;line-height:6.76px;color:#111;-webkit-text-stroke:0.08px currentColor;">Gurmukhi Sangam MN</span>
<span id="t102" class="t" style="left:507.60px;top:321.93px;font-size:5.20px;line-height:6.76px;color:#111;-webkit-text-stroke:0.08px currentColor;">HeadLineA</span>
<span id="t103" class="t" style="left:507.60px;top:331.03px;font-size:5.20px;line-height:6.76px;color:#111;-webkit-text-stroke:0.08px currentColor;">Hei</span>
<span id="t104" class="t" style="left:507.60px;top:340.13px;font-size:5.20px;line-height:6.76px;color:#111;-webkit-text-stroke:0.08px currentColor;">Helvetica</span>
<span id="t105" class="t" style="left:507.60px;top:349.23px;font-size:5.20px;line-height:6.76px;color:#111;-webkit-text-stroke:0.08px currentColor;">Helvetica Condensed</span>
<span id="t106" class="t" style="left:507.60px;top:358.33px;font-size:5.20px;line-height:6.76px;color:#111;-webkit-text-stroke:0.08px currentColor;">Helvetica CY</span>
<span id="t107" class="t" style="left:507.60px;top:367.43px;font-size:5.20px;line-height:6.76px;color:#111;-webkit-text-stroke:0.08px currentColor;">Helvetica Narrow</span>
<span id="t108" class="t" style="left:507.60px;top:376.53px;font-size:5.20px;line-height:6.76px;color:#111;-webkit-text-stroke:0.08px currentColor;">Helvetica Neue</span>
<div style="position:absolute;left:505.60px;top:383.65px;width:62.40px;height:9.10px;background:#d2d2d2"></div>
<span id="t109" class="t" style="left:507.60px;top:385.63px;font-size:5.20px;line-height:6.76px;color:#111;-webkit-text-stroke:0.08px currentColor;">Helvetica Neue LT Pro</span>
<div style="position:absolute;left:570.00px;top:286.60px;width:62.60px;height:9.10px;overflow:hidden">
<span id="t110" class="t" style="left:1.80px;top:-1.07px;font-size:5.20px;line-height:6.76px;color:#111;-webkit-text-stroke:0.08px currentColor;">26 Ultra Light Italic</span>
</div>
<span id="t111" class="t" style="left:571.80px;top:294.63px;font-size:5.20px;line-height:6.76px;color:#111;-webkit-text-stroke:0.08px currentColor;">75 Bold</span>
<span id="t112" class="t" style="left:571.80px;top:303.73px;font-size:5.20px;line-height:6.76px;color:#111;-webkit-text-stroke:0.08px currentColor;">75 Bold Outline</span>
<span id="t113" class="t" style="left:571.80px;top:312.83px;font-size:5.20px;line-height:6.76px;color:#111;-webkit-text-stroke:0.08px currentColor;">85 Heavy</span>
<span id="t114" class="t" style="left:571.80px;top:321.93px;font-size:5.20px;line-height:6.76px;color:#111;-webkit-text-stroke:0.08px currentColor;">95 Black</span>
<span id="t115" class="t" style="left:571.80px;top:331.03px;font-size:5.20px;line-height:6.76px;color:#111;-webkit-text-stroke:0.08px currentColor;">76 Bold Italic</span>
<span id="t116" class="t" style="left:571.80px;top:340.13px;font-size:5.20px;line-height:6.76px;color:#111;-webkit-text-stroke:0.08px currentColor;">86 Heavy Italic</span>
<span id="t117" class="t" style="left:571.80px;top:349.23px;font-size:5.20px;line-height:6.76px;color:#111;-webkit-text-stroke:0.08px currentColor;">96 Black Italic</span>
<span id="t118" class="t" style="left:571.80px;top:358.33px;font-size:5.20px;line-height:6.76px;color:#111;-webkit-text-stroke:0.08px currentColor;">53 Extended</span>
<span id="t119" class="t" style="left:571.80px;top:367.43px;font-size:5.20px;line-height:6.76px;color:#111;-webkit-text-stroke:0.08px currentColor;">63 Medium Extended</span>
<span id="t120" class="t" style="left:571.80px;top:376.53px;font-size:5.20px;line-height:6.76px;color:#111;-webkit-text-stroke:0.08px currentColor;">43 Light Extended</span>
<div style="position:absolute;left:570.00px;top:383.65px;width:62.60px;height:9.10px;background:#d2d2d2"></div>
<span id="t121" class="t" style="left:571.80px;top:385.63px;font-size:5.20px;line-height:6.76px;color:#111;-webkit-text-stroke:0.08px currentColor;">33 Thin Extended</span>
<div style="position:absolute;left:634.8px;top:287.00px;width:20px;height:9.8px;background:#fff;box-shadow:0 0 0 .6px #a0a0a0,inset 0 .7px .6px rgba(0,0,0,.2)"></div>
<div style="position:absolute;left:634.2px;top:297.60px;width:20px;height:.8px;background:#e9e9e9"></div>
<span id="t122" class="t" style="left:636.20px;top:300.09px;font-size:5.40px;line-height:7.02px;color:#111;-webkit-text-stroke:0.08px currentColor;">9</span>
<span id="t123" class="t" style="left:636.20px;top:309.59px;font-size:5.40px;line-height:7.02px;color:#111;-webkit-text-stroke:0.08px currentColor;">10</span>
<span id="t124" class="t" style="left:636.20px;top:319.09px;font-size:5.40px;line-height:7.02px;color:#111;-webkit-text-stroke:0.08px currentColor;">11</span>
<span id="t125" class="t" style="left:636.20px;top:328.59px;font-size:5.40px;line-height:7.02px;color:#111;-webkit-text-stroke:0.08px currentColor;">12</span>
<div style="position:absolute;left:634.80px;top:336.05px;width:15.20px;height:9.50px;background:#d2d2d2"></div>
<span id="t126" class="t" style="left:636.20px;top:338.09px;font-size:5.40px;line-height:7.02px;color:#111;-webkit-text-stroke:0.08px currentColor;">13</span>
<span id="t127" class="t" style="left:636.20px;top:347.59px;font-size:5.40px;line-height:7.02px;color:#111;-webkit-text-stroke:0.08px currentColor;">14</span>
<span id="t128" class="t" style="left:636.20px;top:357.09px;font-size:5.40px;line-height:7.02px;color:#111;-webkit-text-stroke:0.08px currentColor;">18</span>
<span id="t129" class="t" style="left:636.20px;top:366.59px;font-size:5.40px;line-height:7.02px;color:#111;-webkit-text-stroke:0.08px currentColor;">24</span>
<span id="t130" class="t" style="left:636.20px;top:376.09px;font-size:5.40px;line-height:7.02px;color:#111;-webkit-text-stroke:0.08px currentColor;">36</span>
<span id="t131" class="t" style="left:636.20px;top:385.59px;font-size:5.40px;line-height:7.02px;color:#111;-webkit-text-stroke:0.08px currentColor;">48</span>
<div style="position:absolute;left:442.60px;top:396.8px;width:11.40px;height:9px;background:linear-gradient(180deg,#ffffff,#ececec);box-shadow:0 0 0 .6px #9a9a9a"></div>
<div style="position:absolute;left:454.00px;top:396.8px;width:9.70px;height:9px;background:linear-gradient(180deg,#ffffff,#ececec);box-shadow:0 0 0 .6px #9a9a9a"></div>
<div style="position:absolute;left:467.40px;top:396.8px;width:13.10px;height:9px;background:linear-gradient(180deg,#ffffff,#ececec);box-shadow:0 0 0 .6px #9a9a9a"></div>
<span id="t132" class="t" style="left:448.30px;transform:translateX(-50%);top:397.53px;font-size:7.00px;line-height:9.10px;color:#222;font-weight:bold;">+</span>
<span id="t133" class="t" style="left:458.90px;transform:translateX(-50%);top:397.12px;font-size:7.00px;line-height:9.10px;color:#999;">−</span>
<span id="t134" class="t" style="left:472.20px;transform:translateX(-50%);top:398.61px;font-size:5.50px;line-height:7.15px;color:#333;">✱</span>
<div style="position:absolute;left:507.3px;top:397px;width:61px;height:10px;border-radius:5px;background:#fff;box-shadow:0 0 0 .6px #9a9a9a,inset 0 .7px .8px rgba(0,0,0,.25)"></div>
<div style="position:absolute;left:511.4px;top:399.2px;width:3.200px;height:3.200px;border-radius:50%;box-shadow:0 0 0 .6px #666"></div>
</div>
</body></html>
